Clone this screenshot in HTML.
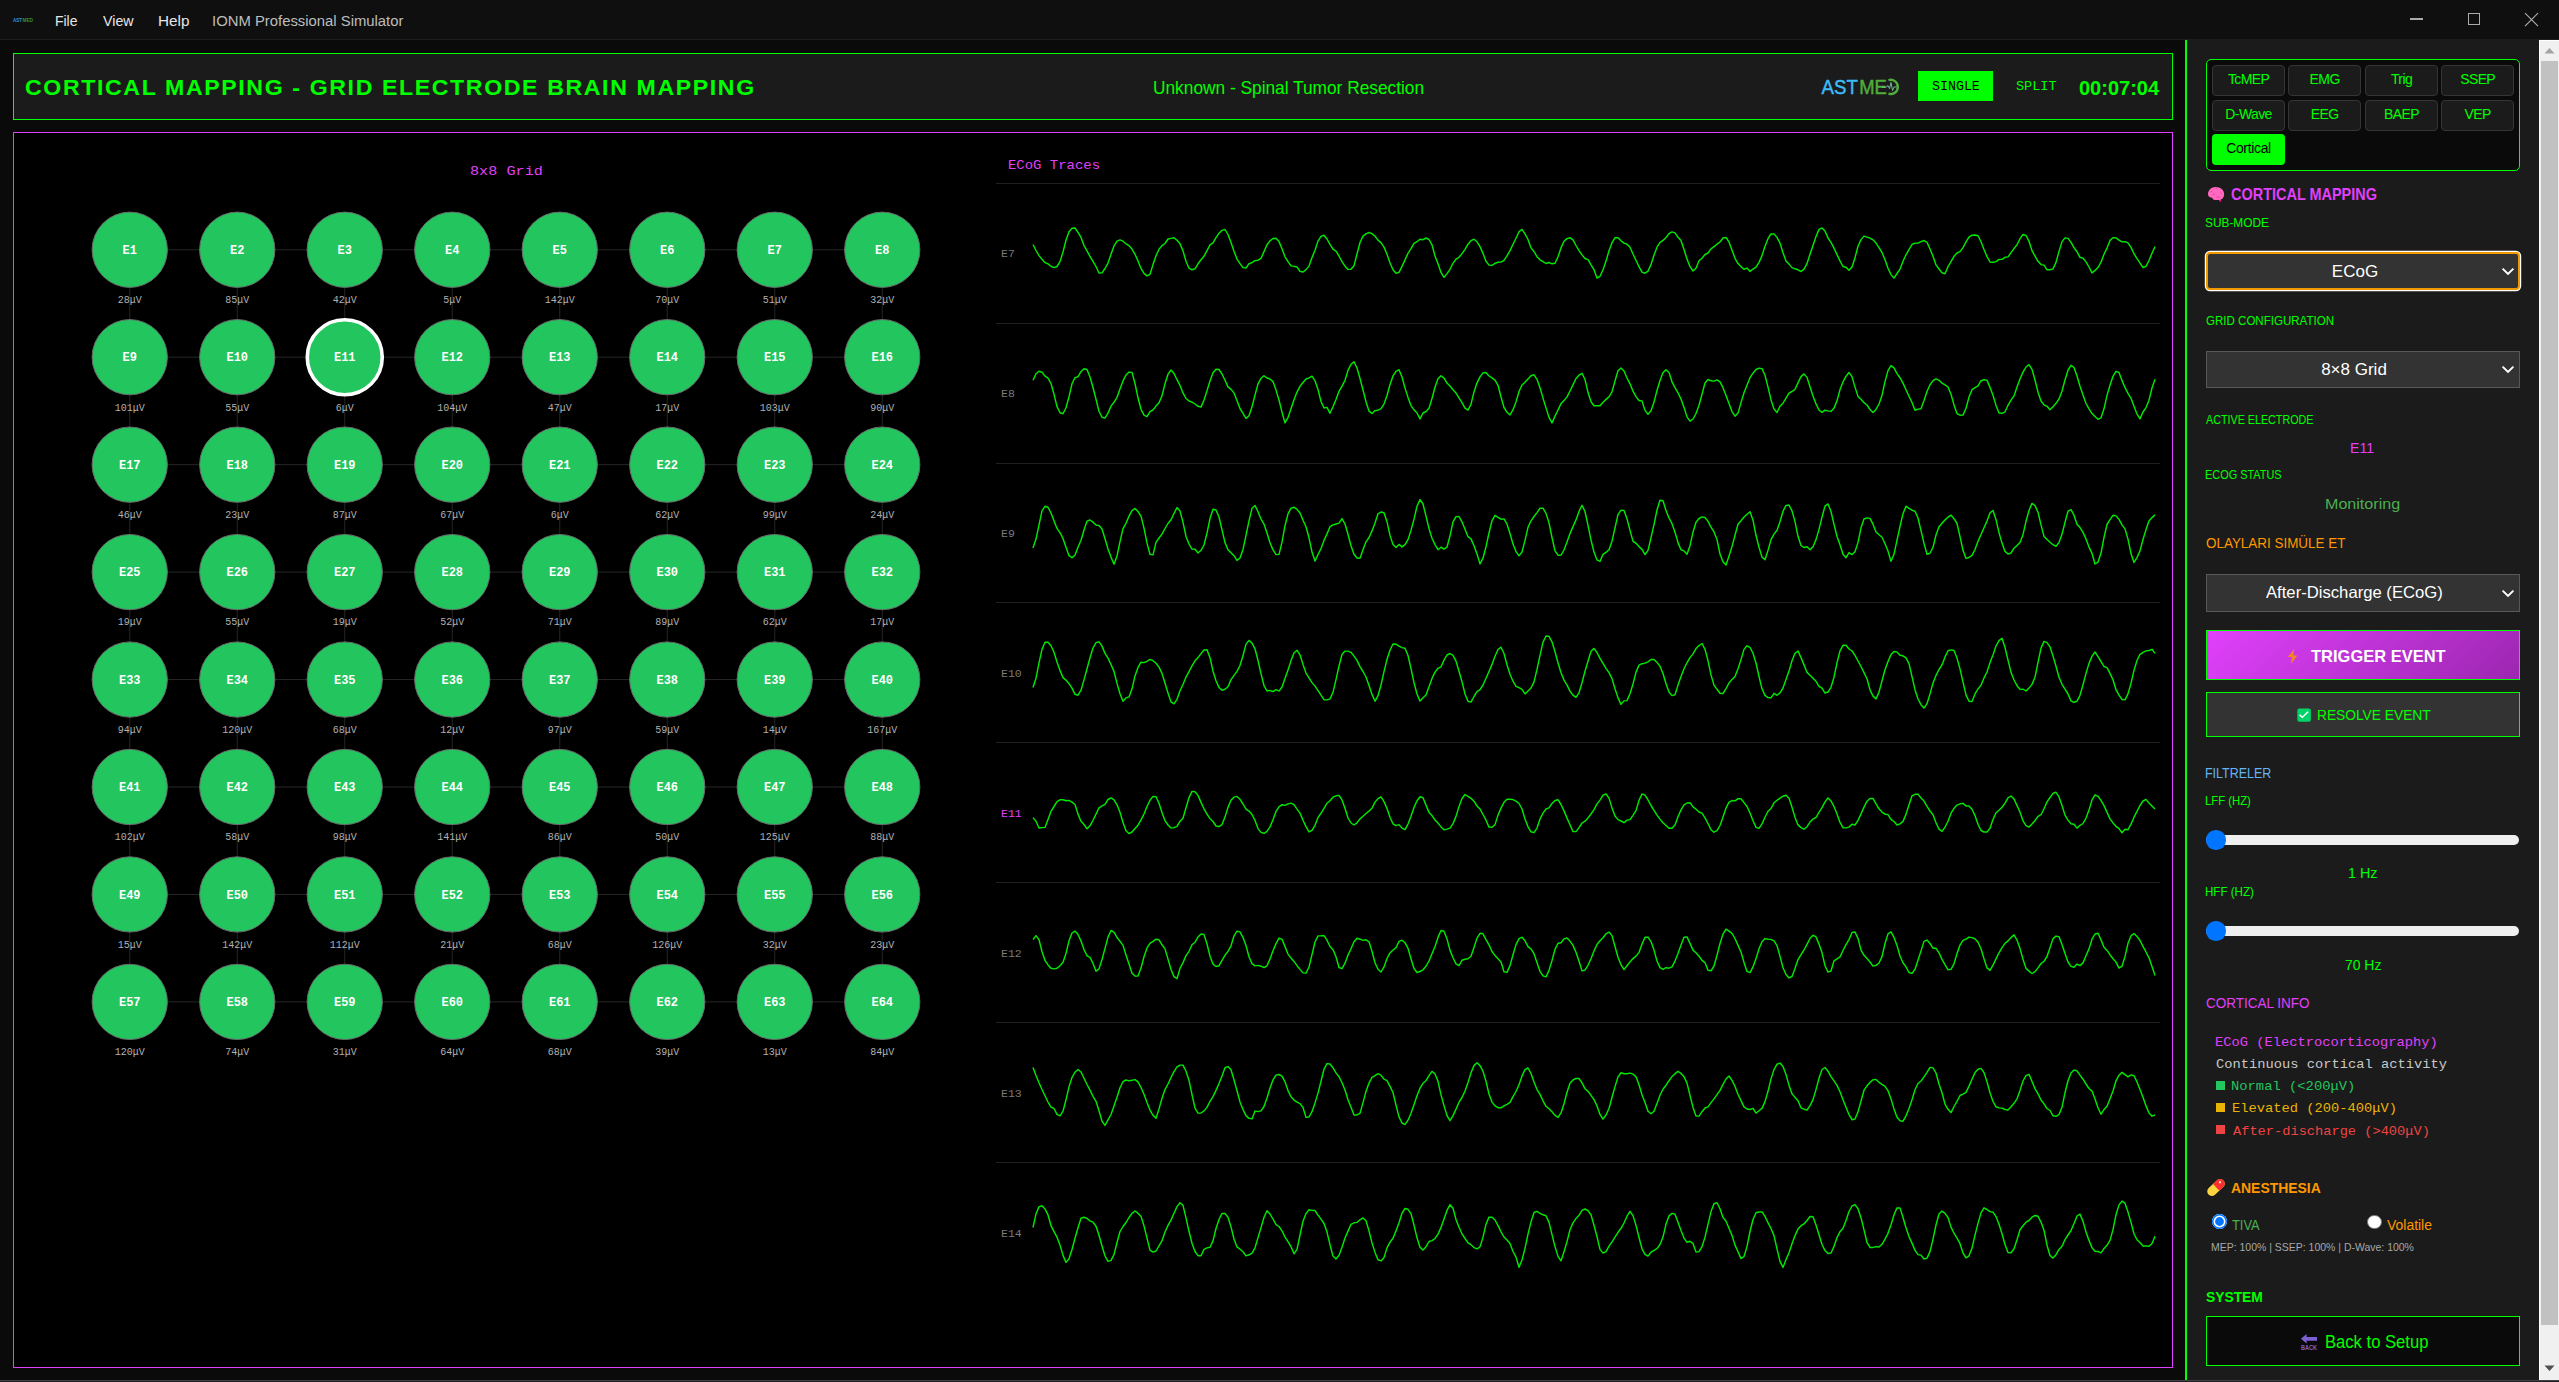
<!DOCTYPE html>
<html><head><meta charset="utf-8"><title>IONM Professional Simulator</title>
<style>
html,body{margin:0;padding:0;}
body{width:2559px;height:1382px;overflow:hidden;background:#0a0a0a;position:relative;font-family:'Liberation Sans', sans-serif;}
.t{position:absolute;line-height:1;white-space:nowrap;}
.r{position:absolute;box-sizing:border-box;}
svg{position:absolute;}
</style></head><body>

<div class="r" style="left:0px;top:0px;width:2559px;height:39px;background:#0f0f0f;"></div>
<div class="r" style="left:0px;top:39px;width:2559px;height:1px;background:#1f1f1f;"></div>
<svg style="left:12px;top:16px" width="24" height="8" viewBox="0 0 24 8"><text x="1" y="6.1" font-family="Liberation Sans" font-weight="700" font-size="6" fill="#3399dd" textLength="9" lengthAdjust="spacingAndGlyphs">AST</text><text x="10.5" y="6.1" font-family="Liberation Sans" font-weight="700" font-size="6" fill="#3f8a30" textLength="10.5" lengthAdjust="spacingAndGlyphs">MED</text></svg>
<div class="t" style="left:54.70px;top:12.58px;font-size:15.5px;color:#e6e6e6;font-weight:400;font-family:'Liberation Sans', sans-serif;transform:scaleX(0.9000);transform-origin:0 0;">File</div>
<div class="t" style="left:102.50px;top:12.58px;font-size:15.5px;color:#e6e6e6;font-weight:400;font-family:'Liberation Sans', sans-serif;transform:scaleX(0.9191);transform-origin:0 0;">View</div>
<div class="t" style="left:158.41px;top:12.58px;font-size:15.5px;color:#e6e6e6;font-weight:400;font-family:'Liberation Sans', sans-serif;transform:scaleX(0.9871);transform-origin:0 0;">Help</div>
<div class="t" style="left:212.14px;top:12.58px;font-size:15.5px;color:#bdbdbd;font-weight:400;font-family:'Liberation Sans', sans-serif;transform:scaleX(0.9580);transform-origin:0 0;">IONM Professional Simulator</div>
<div class="r" style="left:2410px;top:18.4px;width:13px;height:1.2px;background:#ababab;"></div>
<div class="r" style="left:2468px;top:13.2px;width:12px;height:12.3px;border:1.2px solid #ababab;"></div>
<svg style="left:2524px;top:12px" width="15" height="15" viewBox="0 0 15 15"><path d="M1 1.2L14 14.2M14 1.2L1 14.2" stroke="#ababab" stroke-width="1.2"/></svg>
<div class="r" style="left:13px;top:53px;width:2160px;height:67px;background:#1b1b1b;border:1px solid #00ff00;"></div>
<div class="t" style="left:25.28px;top:76.86px;font-size:22.6px;color:#00ff00;font-weight:700;font-family:'Liberation Sans', sans-serif;letter-spacing:1.6px;transform:scaleX(1.0221);transform-origin:0 0;">CORTICAL MAPPING - GRID ELECTRODE BRAIN MAPPING</div>
<div class="t" style="left:1152.82px;top:78.84px;font-size:18.5px;color:#00ff00;font-weight:400;font-family:'Liberation Sans', sans-serif;transform:scaleX(0.9349);transform-origin:0 0;">Unknown - Spinal Tumor Resection</div>
<svg style="left:1816px;top:72px" width="90" height="28" viewBox="0 0 90 28"><text x="5.6" y="22" font-family="Liberation Sans" font-size="20.3" fill="#3cbcf6" stroke="#3cbcf6" stroke-width="0.45" textLength="36.3" lengthAdjust="spacingAndGlyphs">AST</text><text x="43.2" y="22" font-family="Liberation Sans" font-size="20.3" fill="#4fae3a" stroke="#4fae3a" stroke-width="0.45" textLength="27.6" lengthAdjust="spacingAndGlyphs">ME</text><path d="M72.5 8.2 A7 7.1 0 1 1 72.5 21.6" fill="none" stroke="#4fae3a" stroke-width="2.4"/><path d="M66 15.2 L70 15.2 L72 13.6 L73.5 16.6 L75 10.5 L76.5 18.5 L78 15 L80.5 14.8" fill="none" stroke="#7fc9a8" stroke-width="0.9"/></svg>
<div class="r" style="left:1918px;top:71px;width:75px;height:30px;background:#00ff00;"></div>
<div class="t" style="left:1931.90px;top:81.11px;font-size:12px;color:#000;font-weight:400;font-family:'Liberation Mono', monospace;transform:scaleX(1.1070);transform-origin:0 0;">SINGLE</div>
<div class="t" style="left:2015.80px;top:81.11px;font-size:12px;color:#00ff00;font-weight:400;font-family:'Liberation Mono', monospace;transform:scaleX(1.1250);transform-origin:0 0;">SPLIT</div>
<div class="t" style="left:2079.00px;top:77.97px;font-size:20px;color:#00ff00;font-weight:700;font-family:'Liberation Sans', sans-serif;">00:07:04</div>
<div class="r" style="left:13px;top:132px;width:2160px;height:1236px;background:#000;border:1px solid #e040fb;"></div>
<div class="t" style="left:469.98px;top:164.56px;font-size:13.5px;color:#e040fb;font-weight:400;font-family:'Liberation Mono', monospace;transform:scaleX(1.1238);transform-origin:0 0;">8x8 Grid</div>
<svg style="left:0;top:0" width="1000" height="1100" viewBox="0 0 1000 1100"><line x1="129.75" y1="249.75" x2="882.25" y2="249.75" stroke="#262626" stroke-width="1"/><line x1="129.75" y1="357.20" x2="882.25" y2="357.20" stroke="#262626" stroke-width="1"/><line x1="129.75" y1="464.65" x2="882.25" y2="464.65" stroke="#262626" stroke-width="1"/><line x1="129.75" y1="572.10" x2="882.25" y2="572.10" stroke="#262626" stroke-width="1"/><line x1="129.75" y1="679.55" x2="882.25" y2="679.55" stroke="#262626" stroke-width="1"/><line x1="129.75" y1="787.00" x2="882.25" y2="787.00" stroke="#262626" stroke-width="1"/><line x1="129.75" y1="894.45" x2="882.25" y2="894.45" stroke="#262626" stroke-width="1"/><line x1="129.75" y1="1001.90" x2="882.25" y2="1001.90" stroke="#262626" stroke-width="1"/><line x1="129.75" y1="249.75" x2="129.75" y2="1001.9" stroke="#262626" stroke-width="1"/><line x1="237.25" y1="249.75" x2="237.25" y2="1001.9" stroke="#262626" stroke-width="1"/><line x1="344.75" y1="249.75" x2="344.75" y2="1001.9" stroke="#262626" stroke-width="1"/><line x1="452.25" y1="249.75" x2="452.25" y2="1001.9" stroke="#262626" stroke-width="1"/><line x1="559.75" y1="249.75" x2="559.75" y2="1001.9" stroke="#262626" stroke-width="1"/><line x1="667.25" y1="249.75" x2="667.25" y2="1001.9" stroke="#262626" stroke-width="1"/><line x1="774.75" y1="249.75" x2="774.75" y2="1001.9" stroke="#262626" stroke-width="1"/><line x1="882.25" y1="249.75" x2="882.25" y2="1001.9" stroke="#262626" stroke-width="1"/><circle cx="129.75" cy="249.75" r="37.65" fill="#22c55e" stroke="#6a6a6a" stroke-width="1"/><text x="129.75" y="253.95" font-family="Liberation Mono" font-weight="700" font-size="12" fill="#fff" text-anchor="middle">E1</text><text x="129.75" y="303.05" font-family="Liberation Mono" font-size="10" fill="#b0b0b0" text-anchor="middle">28&#956;V</text><circle cx="237.25" cy="249.75" r="37.65" fill="#22c55e" stroke="#6a6a6a" stroke-width="1"/><text x="237.25" y="253.95" font-family="Liberation Mono" font-weight="700" font-size="12" fill="#fff" text-anchor="middle">E2</text><text x="237.25" y="303.05" font-family="Liberation Mono" font-size="10" fill="#b0b0b0" text-anchor="middle">85&#956;V</text><circle cx="344.75" cy="249.75" r="37.65" fill="#22c55e" stroke="#6a6a6a" stroke-width="1"/><text x="344.75" y="253.95" font-family="Liberation Mono" font-weight="700" font-size="12" fill="#fff" text-anchor="middle">E3</text><text x="344.75" y="303.05" font-family="Liberation Mono" font-size="10" fill="#b0b0b0" text-anchor="middle">42&#956;V</text><circle cx="452.25" cy="249.75" r="37.65" fill="#22c55e" stroke="#6a6a6a" stroke-width="1"/><text x="452.25" y="253.95" font-family="Liberation Mono" font-weight="700" font-size="12" fill="#fff" text-anchor="middle">E4</text><text x="452.25" y="303.05" font-family="Liberation Mono" font-size="10" fill="#b0b0b0" text-anchor="middle">5&#956;V</text><circle cx="559.75" cy="249.75" r="37.65" fill="#22c55e" stroke="#6a6a6a" stroke-width="1"/><text x="559.75" y="253.95" font-family="Liberation Mono" font-weight="700" font-size="12" fill="#fff" text-anchor="middle">E5</text><text x="559.75" y="303.05" font-family="Liberation Mono" font-size="10" fill="#b0b0b0" text-anchor="middle">142&#956;V</text><circle cx="667.25" cy="249.75" r="37.65" fill="#22c55e" stroke="#6a6a6a" stroke-width="1"/><text x="667.25" y="253.95" font-family="Liberation Mono" font-weight="700" font-size="12" fill="#fff" text-anchor="middle">E6</text><text x="667.25" y="303.05" font-family="Liberation Mono" font-size="10" fill="#b0b0b0" text-anchor="middle">70&#956;V</text><circle cx="774.75" cy="249.75" r="37.65" fill="#22c55e" stroke="#6a6a6a" stroke-width="1"/><text x="774.75" y="253.95" font-family="Liberation Mono" font-weight="700" font-size="12" fill="#fff" text-anchor="middle">E7</text><text x="774.75" y="303.05" font-family="Liberation Mono" font-size="10" fill="#b0b0b0" text-anchor="middle">51&#956;V</text><circle cx="882.25" cy="249.75" r="37.65" fill="#22c55e" stroke="#6a6a6a" stroke-width="1"/><text x="882.25" y="253.95" font-family="Liberation Mono" font-weight="700" font-size="12" fill="#fff" text-anchor="middle">E8</text><text x="882.25" y="303.05" font-family="Liberation Mono" font-size="10" fill="#b0b0b0" text-anchor="middle">32&#956;V</text><circle cx="129.75" cy="357.20" r="37.65" fill="#22c55e" stroke="#6a6a6a" stroke-width="1"/><text x="129.75" y="361.40" font-family="Liberation Mono" font-weight="700" font-size="12" fill="#fff" text-anchor="middle">E9</text><text x="129.75" y="410.50" font-family="Liberation Mono" font-size="10" fill="#b0b0b0" text-anchor="middle">101&#956;V</text><circle cx="237.25" cy="357.20" r="37.65" fill="#22c55e" stroke="#6a6a6a" stroke-width="1"/><text x="237.25" y="361.40" font-family="Liberation Mono" font-weight="700" font-size="12" fill="#fff" text-anchor="middle">E10</text><text x="237.25" y="410.50" font-family="Liberation Mono" font-size="10" fill="#b0b0b0" text-anchor="middle">55&#956;V</text><circle cx="344.75" cy="357.20" r="37.80" fill="#22c55e"/><circle cx="344.75" cy="357.20" r="37.5" fill="none" stroke="#fff" stroke-width="3.6"/><text x="344.75" y="361.40" font-family="Liberation Mono" font-weight="700" font-size="12" fill="#fff" text-anchor="middle">E11</text><text x="344.75" y="410.50" font-family="Liberation Mono" font-size="10" fill="#b0b0b0" text-anchor="middle">6&#956;V</text><circle cx="452.25" cy="357.20" r="37.65" fill="#22c55e" stroke="#6a6a6a" stroke-width="1"/><text x="452.25" y="361.40" font-family="Liberation Mono" font-weight="700" font-size="12" fill="#fff" text-anchor="middle">E12</text><text x="452.25" y="410.50" font-family="Liberation Mono" font-size="10" fill="#b0b0b0" text-anchor="middle">104&#956;V</text><circle cx="559.75" cy="357.20" r="37.65" fill="#22c55e" stroke="#6a6a6a" stroke-width="1"/><text x="559.75" y="361.40" font-family="Liberation Mono" font-weight="700" font-size="12" fill="#fff" text-anchor="middle">E13</text><text x="559.75" y="410.50" font-family="Liberation Mono" font-size="10" fill="#b0b0b0" text-anchor="middle">47&#956;V</text><circle cx="667.25" cy="357.20" r="37.65" fill="#22c55e" stroke="#6a6a6a" stroke-width="1"/><text x="667.25" y="361.40" font-family="Liberation Mono" font-weight="700" font-size="12" fill="#fff" text-anchor="middle">E14</text><text x="667.25" y="410.50" font-family="Liberation Mono" font-size="10" fill="#b0b0b0" text-anchor="middle">17&#956;V</text><circle cx="774.75" cy="357.20" r="37.65" fill="#22c55e" stroke="#6a6a6a" stroke-width="1"/><text x="774.75" y="361.40" font-family="Liberation Mono" font-weight="700" font-size="12" fill="#fff" text-anchor="middle">E15</text><text x="774.75" y="410.50" font-family="Liberation Mono" font-size="10" fill="#b0b0b0" text-anchor="middle">103&#956;V</text><circle cx="882.25" cy="357.20" r="37.65" fill="#22c55e" stroke="#6a6a6a" stroke-width="1"/><text x="882.25" y="361.40" font-family="Liberation Mono" font-weight="700" font-size="12" fill="#fff" text-anchor="middle">E16</text><text x="882.25" y="410.50" font-family="Liberation Mono" font-size="10" fill="#b0b0b0" text-anchor="middle">90&#956;V</text><circle cx="129.75" cy="464.65" r="37.65" fill="#22c55e" stroke="#6a6a6a" stroke-width="1"/><text x="129.75" y="468.85" font-family="Liberation Mono" font-weight="700" font-size="12" fill="#fff" text-anchor="middle">E17</text><text x="129.75" y="517.95" font-family="Liberation Mono" font-size="10" fill="#b0b0b0" text-anchor="middle">46&#956;V</text><circle cx="237.25" cy="464.65" r="37.65" fill="#22c55e" stroke="#6a6a6a" stroke-width="1"/><text x="237.25" y="468.85" font-family="Liberation Mono" font-weight="700" font-size="12" fill="#fff" text-anchor="middle">E18</text><text x="237.25" y="517.95" font-family="Liberation Mono" font-size="10" fill="#b0b0b0" text-anchor="middle">23&#956;V</text><circle cx="344.75" cy="464.65" r="37.65" fill="#22c55e" stroke="#6a6a6a" stroke-width="1"/><text x="344.75" y="468.85" font-family="Liberation Mono" font-weight="700" font-size="12" fill="#fff" text-anchor="middle">E19</text><text x="344.75" y="517.95" font-family="Liberation Mono" font-size="10" fill="#b0b0b0" text-anchor="middle">87&#956;V</text><circle cx="452.25" cy="464.65" r="37.65" fill="#22c55e" stroke="#6a6a6a" stroke-width="1"/><text x="452.25" y="468.85" font-family="Liberation Mono" font-weight="700" font-size="12" fill="#fff" text-anchor="middle">E20</text><text x="452.25" y="517.95" font-family="Liberation Mono" font-size="10" fill="#b0b0b0" text-anchor="middle">67&#956;V</text><circle cx="559.75" cy="464.65" r="37.65" fill="#22c55e" stroke="#6a6a6a" stroke-width="1"/><text x="559.75" y="468.85" font-family="Liberation Mono" font-weight="700" font-size="12" fill="#fff" text-anchor="middle">E21</text><text x="559.75" y="517.95" font-family="Liberation Mono" font-size="10" fill="#b0b0b0" text-anchor="middle">6&#956;V</text><circle cx="667.25" cy="464.65" r="37.65" fill="#22c55e" stroke="#6a6a6a" stroke-width="1"/><text x="667.25" y="468.85" font-family="Liberation Mono" font-weight="700" font-size="12" fill="#fff" text-anchor="middle">E22</text><text x="667.25" y="517.95" font-family="Liberation Mono" font-size="10" fill="#b0b0b0" text-anchor="middle">62&#956;V</text><circle cx="774.75" cy="464.65" r="37.65" fill="#22c55e" stroke="#6a6a6a" stroke-width="1"/><text x="774.75" y="468.85" font-family="Liberation Mono" font-weight="700" font-size="12" fill="#fff" text-anchor="middle">E23</text><text x="774.75" y="517.95" font-family="Liberation Mono" font-size="10" fill="#b0b0b0" text-anchor="middle">99&#956;V</text><circle cx="882.25" cy="464.65" r="37.65" fill="#22c55e" stroke="#6a6a6a" stroke-width="1"/><text x="882.25" y="468.85" font-family="Liberation Mono" font-weight="700" font-size="12" fill="#fff" text-anchor="middle">E24</text><text x="882.25" y="517.95" font-family="Liberation Mono" font-size="10" fill="#b0b0b0" text-anchor="middle">24&#956;V</text><circle cx="129.75" cy="572.10" r="37.65" fill="#22c55e" stroke="#6a6a6a" stroke-width="1"/><text x="129.75" y="576.30" font-family="Liberation Mono" font-weight="700" font-size="12" fill="#fff" text-anchor="middle">E25</text><text x="129.75" y="625.40" font-family="Liberation Mono" font-size="10" fill="#b0b0b0" text-anchor="middle">19&#956;V</text><circle cx="237.25" cy="572.10" r="37.65" fill="#22c55e" stroke="#6a6a6a" stroke-width="1"/><text x="237.25" y="576.30" font-family="Liberation Mono" font-weight="700" font-size="12" fill="#fff" text-anchor="middle">E26</text><text x="237.25" y="625.40" font-family="Liberation Mono" font-size="10" fill="#b0b0b0" text-anchor="middle">55&#956;V</text><circle cx="344.75" cy="572.10" r="37.65" fill="#22c55e" stroke="#6a6a6a" stroke-width="1"/><text x="344.75" y="576.30" font-family="Liberation Mono" font-weight="700" font-size="12" fill="#fff" text-anchor="middle">E27</text><text x="344.75" y="625.40" font-family="Liberation Mono" font-size="10" fill="#b0b0b0" text-anchor="middle">19&#956;V</text><circle cx="452.25" cy="572.10" r="37.65" fill="#22c55e" stroke="#6a6a6a" stroke-width="1"/><text x="452.25" y="576.30" font-family="Liberation Mono" font-weight="700" font-size="12" fill="#fff" text-anchor="middle">E28</text><text x="452.25" y="625.40" font-family="Liberation Mono" font-size="10" fill="#b0b0b0" text-anchor="middle">52&#956;V</text><circle cx="559.75" cy="572.10" r="37.65" fill="#22c55e" stroke="#6a6a6a" stroke-width="1"/><text x="559.75" y="576.30" font-family="Liberation Mono" font-weight="700" font-size="12" fill="#fff" text-anchor="middle">E29</text><text x="559.75" y="625.40" font-family="Liberation Mono" font-size="10" fill="#b0b0b0" text-anchor="middle">71&#956;V</text><circle cx="667.25" cy="572.10" r="37.65" fill="#22c55e" stroke="#6a6a6a" stroke-width="1"/><text x="667.25" y="576.30" font-family="Liberation Mono" font-weight="700" font-size="12" fill="#fff" text-anchor="middle">E30</text><text x="667.25" y="625.40" font-family="Liberation Mono" font-size="10" fill="#b0b0b0" text-anchor="middle">89&#956;V</text><circle cx="774.75" cy="572.10" r="37.65" fill="#22c55e" stroke="#6a6a6a" stroke-width="1"/><text x="774.75" y="576.30" font-family="Liberation Mono" font-weight="700" font-size="12" fill="#fff" text-anchor="middle">E31</text><text x="774.75" y="625.40" font-family="Liberation Mono" font-size="10" fill="#b0b0b0" text-anchor="middle">62&#956;V</text><circle cx="882.25" cy="572.10" r="37.65" fill="#22c55e" stroke="#6a6a6a" stroke-width="1"/><text x="882.25" y="576.30" font-family="Liberation Mono" font-weight="700" font-size="12" fill="#fff" text-anchor="middle">E32</text><text x="882.25" y="625.40" font-family="Liberation Mono" font-size="10" fill="#b0b0b0" text-anchor="middle">17&#956;V</text><circle cx="129.75" cy="679.55" r="37.65" fill="#22c55e" stroke="#6a6a6a" stroke-width="1"/><text x="129.75" y="683.75" font-family="Liberation Mono" font-weight="700" font-size="12" fill="#fff" text-anchor="middle">E33</text><text x="129.75" y="732.85" font-family="Liberation Mono" font-size="10" fill="#b0b0b0" text-anchor="middle">94&#956;V</text><circle cx="237.25" cy="679.55" r="37.65" fill="#22c55e" stroke="#6a6a6a" stroke-width="1"/><text x="237.25" y="683.75" font-family="Liberation Mono" font-weight="700" font-size="12" fill="#fff" text-anchor="middle">E34</text><text x="237.25" y="732.85" font-family="Liberation Mono" font-size="10" fill="#b0b0b0" text-anchor="middle">120&#956;V</text><circle cx="344.75" cy="679.55" r="37.65" fill="#22c55e" stroke="#6a6a6a" stroke-width="1"/><text x="344.75" y="683.75" font-family="Liberation Mono" font-weight="700" font-size="12" fill="#fff" text-anchor="middle">E35</text><text x="344.75" y="732.85" font-family="Liberation Mono" font-size="10" fill="#b0b0b0" text-anchor="middle">68&#956;V</text><circle cx="452.25" cy="679.55" r="37.65" fill="#22c55e" stroke="#6a6a6a" stroke-width="1"/><text x="452.25" y="683.75" font-family="Liberation Mono" font-weight="700" font-size="12" fill="#fff" text-anchor="middle">E36</text><text x="452.25" y="732.85" font-family="Liberation Mono" font-size="10" fill="#b0b0b0" text-anchor="middle">12&#956;V</text><circle cx="559.75" cy="679.55" r="37.65" fill="#22c55e" stroke="#6a6a6a" stroke-width="1"/><text x="559.75" y="683.75" font-family="Liberation Mono" font-weight="700" font-size="12" fill="#fff" text-anchor="middle">E37</text><text x="559.75" y="732.85" font-family="Liberation Mono" font-size="10" fill="#b0b0b0" text-anchor="middle">97&#956;V</text><circle cx="667.25" cy="679.55" r="37.65" fill="#22c55e" stroke="#6a6a6a" stroke-width="1"/><text x="667.25" y="683.75" font-family="Liberation Mono" font-weight="700" font-size="12" fill="#fff" text-anchor="middle">E38</text><text x="667.25" y="732.85" font-family="Liberation Mono" font-size="10" fill="#b0b0b0" text-anchor="middle">59&#956;V</text><circle cx="774.75" cy="679.55" r="37.65" fill="#22c55e" stroke="#6a6a6a" stroke-width="1"/><text x="774.75" y="683.75" font-family="Liberation Mono" font-weight="700" font-size="12" fill="#fff" text-anchor="middle">E39</text><text x="774.75" y="732.85" font-family="Liberation Mono" font-size="10" fill="#b0b0b0" text-anchor="middle">14&#956;V</text><circle cx="882.25" cy="679.55" r="37.65" fill="#22c55e" stroke="#6a6a6a" stroke-width="1"/><text x="882.25" y="683.75" font-family="Liberation Mono" font-weight="700" font-size="12" fill="#fff" text-anchor="middle">E40</text><text x="882.25" y="732.85" font-family="Liberation Mono" font-size="10" fill="#b0b0b0" text-anchor="middle">167&#956;V</text><circle cx="129.75" cy="787.00" r="37.65" fill="#22c55e" stroke="#6a6a6a" stroke-width="1"/><text x="129.75" y="791.20" font-family="Liberation Mono" font-weight="700" font-size="12" fill="#fff" text-anchor="middle">E41</text><text x="129.75" y="840.30" font-family="Liberation Mono" font-size="10" fill="#b0b0b0" text-anchor="middle">102&#956;V</text><circle cx="237.25" cy="787.00" r="37.65" fill="#22c55e" stroke="#6a6a6a" stroke-width="1"/><text x="237.25" y="791.20" font-family="Liberation Mono" font-weight="700" font-size="12" fill="#fff" text-anchor="middle">E42</text><text x="237.25" y="840.30" font-family="Liberation Mono" font-size="10" fill="#b0b0b0" text-anchor="middle">58&#956;V</text><circle cx="344.75" cy="787.00" r="37.65" fill="#22c55e" stroke="#6a6a6a" stroke-width="1"/><text x="344.75" y="791.20" font-family="Liberation Mono" font-weight="700" font-size="12" fill="#fff" text-anchor="middle">E43</text><text x="344.75" y="840.30" font-family="Liberation Mono" font-size="10" fill="#b0b0b0" text-anchor="middle">98&#956;V</text><circle cx="452.25" cy="787.00" r="37.65" fill="#22c55e" stroke="#6a6a6a" stroke-width="1"/><text x="452.25" y="791.20" font-family="Liberation Mono" font-weight="700" font-size="12" fill="#fff" text-anchor="middle">E44</text><text x="452.25" y="840.30" font-family="Liberation Mono" font-size="10" fill="#b0b0b0" text-anchor="middle">141&#956;V</text><circle cx="559.75" cy="787.00" r="37.65" fill="#22c55e" stroke="#6a6a6a" stroke-width="1"/><text x="559.75" y="791.20" font-family="Liberation Mono" font-weight="700" font-size="12" fill="#fff" text-anchor="middle">E45</text><text x="559.75" y="840.30" font-family="Liberation Mono" font-size="10" fill="#b0b0b0" text-anchor="middle">86&#956;V</text><circle cx="667.25" cy="787.00" r="37.65" fill="#22c55e" stroke="#6a6a6a" stroke-width="1"/><text x="667.25" y="791.20" font-family="Liberation Mono" font-weight="700" font-size="12" fill="#fff" text-anchor="middle">E46</text><text x="667.25" y="840.30" font-family="Liberation Mono" font-size="10" fill="#b0b0b0" text-anchor="middle">50&#956;V</text><circle cx="774.75" cy="787.00" r="37.65" fill="#22c55e" stroke="#6a6a6a" stroke-width="1"/><text x="774.75" y="791.20" font-family="Liberation Mono" font-weight="700" font-size="12" fill="#fff" text-anchor="middle">E47</text><text x="774.75" y="840.30" font-family="Liberation Mono" font-size="10" fill="#b0b0b0" text-anchor="middle">125&#956;V</text><circle cx="882.25" cy="787.00" r="37.65" fill="#22c55e" stroke="#6a6a6a" stroke-width="1"/><text x="882.25" y="791.20" font-family="Liberation Mono" font-weight="700" font-size="12" fill="#fff" text-anchor="middle">E48</text><text x="882.25" y="840.30" font-family="Liberation Mono" font-size="10" fill="#b0b0b0" text-anchor="middle">88&#956;V</text><circle cx="129.75" cy="894.45" r="37.65" fill="#22c55e" stroke="#6a6a6a" stroke-width="1"/><text x="129.75" y="898.65" font-family="Liberation Mono" font-weight="700" font-size="12" fill="#fff" text-anchor="middle">E49</text><text x="129.75" y="947.75" font-family="Liberation Mono" font-size="10" fill="#b0b0b0" text-anchor="middle">15&#956;V</text><circle cx="237.25" cy="894.45" r="37.65" fill="#22c55e" stroke="#6a6a6a" stroke-width="1"/><text x="237.25" y="898.65" font-family="Liberation Mono" font-weight="700" font-size="12" fill="#fff" text-anchor="middle">E50</text><text x="237.25" y="947.75" font-family="Liberation Mono" font-size="10" fill="#b0b0b0" text-anchor="middle">142&#956;V</text><circle cx="344.75" cy="894.45" r="37.65" fill="#22c55e" stroke="#6a6a6a" stroke-width="1"/><text x="344.75" y="898.65" font-family="Liberation Mono" font-weight="700" font-size="12" fill="#fff" text-anchor="middle">E51</text><text x="344.75" y="947.75" font-family="Liberation Mono" font-size="10" fill="#b0b0b0" text-anchor="middle">112&#956;V</text><circle cx="452.25" cy="894.45" r="37.65" fill="#22c55e" stroke="#6a6a6a" stroke-width="1"/><text x="452.25" y="898.65" font-family="Liberation Mono" font-weight="700" font-size="12" fill="#fff" text-anchor="middle">E52</text><text x="452.25" y="947.75" font-family="Liberation Mono" font-size="10" fill="#b0b0b0" text-anchor="middle">21&#956;V</text><circle cx="559.75" cy="894.45" r="37.65" fill="#22c55e" stroke="#6a6a6a" stroke-width="1"/><text x="559.75" y="898.65" font-family="Liberation Mono" font-weight="700" font-size="12" fill="#fff" text-anchor="middle">E53</text><text x="559.75" y="947.75" font-family="Liberation Mono" font-size="10" fill="#b0b0b0" text-anchor="middle">68&#956;V</text><circle cx="667.25" cy="894.45" r="37.65" fill="#22c55e" stroke="#6a6a6a" stroke-width="1"/><text x="667.25" y="898.65" font-family="Liberation Mono" font-weight="700" font-size="12" fill="#fff" text-anchor="middle">E54</text><text x="667.25" y="947.75" font-family="Liberation Mono" font-size="10" fill="#b0b0b0" text-anchor="middle">126&#956;V</text><circle cx="774.75" cy="894.45" r="37.65" fill="#22c55e" stroke="#6a6a6a" stroke-width="1"/><text x="774.75" y="898.65" font-family="Liberation Mono" font-weight="700" font-size="12" fill="#fff" text-anchor="middle">E55</text><text x="774.75" y="947.75" font-family="Liberation Mono" font-size="10" fill="#b0b0b0" text-anchor="middle">32&#956;V</text><circle cx="882.25" cy="894.45" r="37.65" fill="#22c55e" stroke="#6a6a6a" stroke-width="1"/><text x="882.25" y="898.65" font-family="Liberation Mono" font-weight="700" font-size="12" fill="#fff" text-anchor="middle">E56</text><text x="882.25" y="947.75" font-family="Liberation Mono" font-size="10" fill="#b0b0b0" text-anchor="middle">23&#956;V</text><circle cx="129.75" cy="1001.90" r="37.65" fill="#22c55e" stroke="#6a6a6a" stroke-width="1"/><text x="129.75" y="1006.10" font-family="Liberation Mono" font-weight="700" font-size="12" fill="#fff" text-anchor="middle">E57</text><text x="129.75" y="1055.20" font-family="Liberation Mono" font-size="10" fill="#b0b0b0" text-anchor="middle">120&#956;V</text><circle cx="237.25" cy="1001.90" r="37.65" fill="#22c55e" stroke="#6a6a6a" stroke-width="1"/><text x="237.25" y="1006.10" font-family="Liberation Mono" font-weight="700" font-size="12" fill="#fff" text-anchor="middle">E58</text><text x="237.25" y="1055.20" font-family="Liberation Mono" font-size="10" fill="#b0b0b0" text-anchor="middle">74&#956;V</text><circle cx="344.75" cy="1001.90" r="37.65" fill="#22c55e" stroke="#6a6a6a" stroke-width="1"/><text x="344.75" y="1006.10" font-family="Liberation Mono" font-weight="700" font-size="12" fill="#fff" text-anchor="middle">E59</text><text x="344.75" y="1055.20" font-family="Liberation Mono" font-size="10" fill="#b0b0b0" text-anchor="middle">31&#956;V</text><circle cx="452.25" cy="1001.90" r="37.65" fill="#22c55e" stroke="#6a6a6a" stroke-width="1"/><text x="452.25" y="1006.10" font-family="Liberation Mono" font-weight="700" font-size="12" fill="#fff" text-anchor="middle">E60</text><text x="452.25" y="1055.20" font-family="Liberation Mono" font-size="10" fill="#b0b0b0" text-anchor="middle">64&#956;V</text><circle cx="559.75" cy="1001.90" r="37.65" fill="#22c55e" stroke="#6a6a6a" stroke-width="1"/><text x="559.75" y="1006.10" font-family="Liberation Mono" font-weight="700" font-size="12" fill="#fff" text-anchor="middle">E61</text><text x="559.75" y="1055.20" font-family="Liberation Mono" font-size="10" fill="#b0b0b0" text-anchor="middle">68&#956;V</text><circle cx="667.25" cy="1001.90" r="37.65" fill="#22c55e" stroke="#6a6a6a" stroke-width="1"/><text x="667.25" y="1006.10" font-family="Liberation Mono" font-weight="700" font-size="12" fill="#fff" text-anchor="middle">E62</text><text x="667.25" y="1055.20" font-family="Liberation Mono" font-size="10" fill="#b0b0b0" text-anchor="middle">39&#956;V</text><circle cx="774.75" cy="1001.90" r="37.65" fill="#22c55e" stroke="#6a6a6a" stroke-width="1"/><text x="774.75" y="1006.10" font-family="Liberation Mono" font-weight="700" font-size="12" fill="#fff" text-anchor="middle">E63</text><text x="774.75" y="1055.20" font-family="Liberation Mono" font-size="10" fill="#b0b0b0" text-anchor="middle">13&#956;V</text><circle cx="882.25" cy="1001.90" r="37.65" fill="#22c55e" stroke="#6a6a6a" stroke-width="1"/><text x="882.25" y="1006.10" font-family="Liberation Mono" font-weight="700" font-size="12" fill="#fff" text-anchor="middle">E64</text><text x="882.25" y="1055.20" font-family="Liberation Mono" font-size="10" fill="#b0b0b0" text-anchor="middle">84&#956;V</text></svg>
<div class="t" style="left:1007.73px;top:158.94px;font-size:13px;color:#e040fb;font-weight:400;font-family:'Liberation Mono', monospace;transform:scaleX(1.0726);transform-origin:0 0;">ECoG Traces</div>
<svg style="left:990px;top:170px" width="1180" height="1140" viewBox="990 170 1180 1140"><line x1="996" y1="183.5" x2="2160" y2="183.5" stroke="#212121" stroke-width="1"/><text x="1001" y="257" font-family="Liberation Mono" font-size="11.5" fill="#7a7a7a">E7</text><polyline points="1033,244.5 1036,250.5 1039,255.6 1042,259.3 1045,262.7 1048,263.9 1051,266.3 1054,267.6 1057,266.5 1060,261.6 1063,252.0 1066,240.3 1069,231.8 1072,228.3 1075,228.0 1078,232.4 1081,237.4 1084,245.6 1087,250.9 1090,256.5 1093,261.3 1096,266.5 1099,273.0 1102,272.9 1105,268.5 1108,263.1 1111,254.3 1114,245.9 1117,241.1 1120,239.9 1123,241.2 1126,243.8 1129,245.7 1132,249.1 1135,254.3 1138,260.9 1141,268.4 1144,273.4 1147,275.9 1150,274.3 1153,264.6 1156,255.8 1159,249.3 1162,245.6 1165,243.5 1168,239.0 1171,238.4 1174,237.8 1177,240.3 1180,243.8 1183,250.9 1186,261.2 1189,268.2 1192,269.8 1195,268.8 1198,263.8 1201,259.8 1204,256.2 1207,250.7 1210,244.9 1213,242.9 1216,237.6 1219,233.2 1222,230.4 1225,229.5 1228,234.5 1231,242.5 1234,251.2 1237,259.1 1240,263.6 1243,267.6 1246,268.0 1249,263.7 1252,262.6 1255,260.6 1258,260.2 1261,258.4 1264,251.6 1267,244.7 1270,240.9 1273,238.5 1276,238.2 1279,241.6 1282,248.8 1285,256.8 1288,261.6 1291,265.9 1294,266.4 1297,267.0 1300,271.3 1303,272.0 1306,269.6 1309,266.1 1312,257.6 1315,250.3 1318,241.1 1321,236.4 1324,235.2 1327,239.0 1330,244.4 1333,249.2 1336,251.1 1339,256.0 1342,261.7 1345,266.2 1348,269.4 1351,269.2 1354,265.7 1357,254.0 1360,242.5 1363,236.1 1366,233.8 1369,232.5 1372,233.6 1375,236.3 1378,240.1 1381,242.6 1384,247.1 1387,254.3 1390,262.8 1393,269.7 1396,273.2 1399,272.3 1402,266.4 1405,259.9 1408,253.3 1411,248.7 1414,243.4 1417,241.7 1420,239.3 1423,239.7 1426,238.0 1429,239.5 1432,244.8 1435,256.0 1438,263.8 1441,272.4 1444,277.4 1447,273.6 1450,269.3 1453,263.3 1456,259.1 1459,257.3 1462,253.6 1465,249.4 1468,244.2 1471,240.7 1474,239.2 1477,241.8 1480,246.6 1483,253.4 1486,261.3 1489,265.1 1492,265.4 1495,263.3 1498,262.2 1501,262.1 1504,260.3 1507,255.9 1510,250.6 1513,244.2 1516,238.2 1519,231.8 1522,229.4 1525,233.8 1528,239.5 1531,247.9 1534,251.5 1537,256.7 1540,259.8 1543,261.6 1546,263.5 1549,262.5 1552,263.8 1555,263.3 1558,256.7 1561,247.9 1564,241.3 1567,238.6 1570,237.7 1573,239.9 1576,245.5 1579,250.6 1582,254.9 1585,258.5 1588,259.7 1591,264.9 1594,269.7 1597,278.1 1600,276.3 1603,269.8 1606,261.1 1609,250.8 1612,242.8 1615,237.7 1618,237.7 1621,240.8 1624,243.1 1627,244.2 1630,247.2 1633,254.0 1636,260.2 1639,266.7 1642,272.1 1645,273.2 1648,271.1 1651,264.4 1654,255.3 1657,247.2 1660,242.3 1663,240.4 1666,237.5 1669,233.6 1672,231.9 1675,232.9 1678,237.3 1681,240.5 1684,249.6 1687,259.1 1690,266.7 1693,271.0 1696,268.2 1699,260.7 1702,258.2 1705,254.5 1708,253.0 1711,248.9 1714,246.6 1717,244.2 1720,242.0 1723,238.0 1726,237.5 1729,241.9 1732,250.1 1735,258.3 1738,263.6 1741,266.6 1744,269.2 1747,268.1 1750,271.4 1753,269.2 1756,267.1 1759,262.4 1762,255.6 1765,246.3 1768,238.7 1771,233.9 1774,233.9 1777,237.4 1780,243.1 1783,252.7 1786,261.1 1789,264.1 1792,267.6 1795,268.8 1798,269.8 1801,271.5 1804,269.2 1807,263.6 1810,254.3 1813,245.4 1816,236.6 1819,229.4 1822,227.9 1825,231.1 1828,238.0 1831,242.4 1834,248.2 1837,254.6 1840,260.9 1843,266.5 1846,267.2 1849,270.2 1852,267.0 1855,257.8 1858,246.2 1861,239.6 1864,236.1 1867,237.1 1870,238.1 1873,239.8 1876,243.1 1879,247.7 1882,252.5 1885,259.8 1888,268.2 1891,274.6 1894,278.1 1897,273.5 1900,269.2 1903,261.3 1906,254.8 1909,249.6 1912,244.5 1915,243.2 1918,243.1 1921,241.6 1924,240.5 1927,242.3 1930,249.0 1933,256.3 1936,264.9 1939,269.0 1942,272.8 1945,273.7 1948,266.7 1951,261.7 1954,256.3 1957,253.0 1960,251.6 1963,247.6 1966,241.9 1969,237.1 1972,235.2 1975,235.0 1978,235.7 1981,241.8 1984,249.5 1987,256.6 1990,262.0 1993,262.3 1996,261.6 1999,259.4 2002,259.3 2005,257.3 2008,256.9 2011,252.7 2014,248.6 2017,244.7 2020,238.7 2023,234.5 2026,235.5 2029,241.3 2032,250.6 2035,256.2 2038,261.3 2041,264.6 2044,265.1 2047,269.8 2050,269.8 2053,268.9 2056,262.4 2059,251.4 2062,241.6 2065,237.9 2068,238.4 2071,242.2 2074,247.8 2077,251.8 2080,257.3 2083,258.3 2086,261.9 2089,267.0 2092,272.9 2095,270.4 2098,267.5 2101,262.2 2104,254.2 2107,248.1 2110,240.4 2113,237.8 2116,237.9 2119,240.1 2122,241.9 2125,241.7 2128,242.9 2131,247.4 2134,253.7 2137,258.6 2140,263.1 2143,267.5 2146,266.4 2149,260.5 2152,253.2 2155,246.6" fill="none" stroke="#00e800" stroke-width="1.45" stroke-linejoin="round"/><line x1="996" y1="323.5" x2="2160" y2="323.5" stroke="#212121" stroke-width="1"/><text x="1001" y="397" font-family="Liberation Mono" font-size="11.5" fill="#7a7a7a">E8</text><polyline points="1033,380.3 1036,373.8 1039,371.2 1042,372.3 1045,376.1 1048,378.1 1051,383.5 1054,394.3 1057,406.6 1060,412.7 1063,413.7 1066,407.7 1069,396.7 1072,383.8 1075,377.6 1078,376.7 1081,371.6 1084,368.7 1087,369.5 1090,377.0 1093,387.5 1096,399.3 1099,411.2 1102,417.2 1105,418.1 1108,413.2 1111,406.1 1114,402.3 1117,397.3 1120,388.9 1123,380.9 1126,375.0 1129,372.1 1132,372.4 1135,383.5 1138,397.8 1141,409.3 1144,415.1 1147,416.6 1150,411.6 1153,410.0 1156,406.1 1159,402.8 1162,395.8 1165,383.7 1168,374.2 1171,370.0 1174,373.5 1177,379.7 1180,385.4 1183,392.9 1186,398.5 1189,401.0 1192,402.2 1195,404.0 1198,406.3 1201,407.1 1204,400.0 1207,390.6 1210,381.0 1213,372.8 1216,369.2 1219,369.5 1222,374.0 1225,380.2 1228,386.9 1231,389.4 1234,392.9 1237,400.8 1240,408.5 1243,413.3 1246,418.4 1249,415.8 1252,406.8 1255,395.1 1258,383.9 1261,378.3 1264,375.8 1267,378.0 1270,379.0 1273,381.6 1276,390.1 1279,400.0 1282,412.2 1285,422.9 1288,417.6 1291,408.8 1294,399.7 1297,392.1 1300,386.3 1303,382.5 1306,379.0 1309,377.8 1312,376.2 1315,380.8 1318,389.4 1321,401.5 1324,408.0 1327,407.4 1330,413.3 1333,406.7 1336,399.5 1339,391.3 1342,386.2 1345,380.3 1348,370.4 1351,364.3 1354,361.8 1357,368.0 1360,378.5 1363,390.0 1366,401.7 1369,411.1 1372,413.5 1375,410.6 1378,410.2 1381,408.7 1384,404.1 1387,395.5 1390,384.5 1393,375.9 1396,371.3 1399,369.7 1402,377.0 1405,388.1 1408,397.4 1411,405.6 1414,409.8 1417,413.0 1420,418.9 1423,413.0 1426,411.5 1429,408.3 1432,398.5 1435,387.3 1438,378.7 1441,375.7 1444,378.1 1447,383.0 1450,386.0 1453,389.7 1456,393.1 1459,397.9 1462,402.7 1465,408.2 1468,410.2 1471,404.1 1474,391.9 1477,382.8 1480,376.9 1483,372.9 1486,372.5 1489,376.0 1492,377.9 1495,380.2 1498,385.3 1501,397.0 1504,407.5 1507,412.3 1510,415.0 1513,409.7 1516,401.9 1519,391.5 1522,385.0 1525,382.2 1528,379.0 1531,375.8 1534,374.8 1537,379.3 1540,387.7 1543,398.1 1546,407.9 1549,417.4 1552,422.9 1555,416.1 1558,410.0 1561,403.6 1564,400.6 1567,396.9 1570,391.0 1573,384.9 1576,378.5 1579,375.2 1582,373.3 1585,379.5 1588,392.3 1591,401.8 1594,405.8 1597,405.8 1600,405.8 1603,402.2 1606,399.4 1609,396.9 1612,391.9 1615,381.0 1618,370.8 1621,368.0 1624,371.0 1627,378.0 1630,383.8 1633,391.2 1636,396.6 1639,400.5 1642,401.0 1645,410.4 1648,414.2 1651,410.7 1654,402.1 1657,390.5 1660,380.5 1663,372.6 1666,369.8 1669,372.5 1672,381.8 1675,387.7 1678,392.8 1681,399.1 1684,407.4 1687,416.9 1690,421.2 1693,419.0 1696,413.5 1699,405.2 1702,394.2 1705,383.0 1708,379.5 1711,380.8 1714,381.1 1717,379.9 1720,381.8 1723,387.7 1726,395.6 1729,403.4 1732,411.6 1735,416.2 1738,413.1 1741,402.6 1744,392.7 1747,385.3 1750,377.7 1753,373.2 1756,369.5 1759,368.2 1762,368.6 1765,375.2 1768,387.1 1771,399.7 1774,409.1 1777,412.4 1780,406.3 1783,403.2 1786,398.1 1789,393.2 1792,391.5 1795,389.3 1798,382.9 1801,376.6 1804,373.9 1807,377.4 1810,386.7 1813,396.0 1816,403.9 1819,410.0 1822,412.4 1825,410.2 1828,410.9 1831,411.4 1834,408.1 1837,400.9 1840,389.6 1843,381.9 1846,376.2 1849,372.5 1852,376.6 1855,387.1 1858,396.4 1861,399.3 1864,402.7 1867,405.0 1870,409.6 1873,412.6 1876,409.4 1879,404.0 1882,395.4 1885,381.6 1888,370.6 1891,365.5 1894,367.8 1897,373.6 1900,377.7 1903,383.1 1906,389.8 1909,396.3 1912,402.5 1915,410.2 1918,409.1 1921,408.7 1924,400.5 1927,391.5 1930,384.7 1933,380.6 1936,378.9 1939,380.3 1942,383.1 1945,384.9 1948,387.0 1951,394.2 1954,404.9 1957,413.6 1960,415.2 1963,415.1 1966,408.2 1969,397.1 1972,389.7 1975,387.7 1978,385.8 1981,380.7 1984,379.7 1987,380.4 1990,387.4 1993,395.3 1996,405.4 1999,413.1 2002,413.3 2005,411.8 2008,405.3 2011,400.1 2014,395.9 2017,387.1 2020,379.0 2023,372.1 2026,367.0 2029,364.7 2032,369.4 2035,380.0 2038,392.2 2041,401.0 2044,404.9 2047,406.3 2050,409.7 2053,406.8 2056,403.3 2059,399.0 2062,391.3 2065,380.0 2068,370.2 2071,365.3 2074,367.5 2077,376.0 2080,386.2 2083,395.1 2086,403.5 2089,408.8 2092,413.6 2095,416.5 2098,419.3 2101,417.8 2104,408.8 2107,395.4 2110,385.3 2113,376.3 2116,371.3 2119,372.5 2122,380.4 2125,387.7 2128,393.4 2131,398.3 2134,406.2 2137,414.1 2140,418.9 2143,412.0 2146,407.6 2149,400.2 2152,388.0 2155,379.2" fill="none" stroke="#00e800" stroke-width="1.45" stroke-linejoin="round"/><line x1="996" y1="463.5" x2="2160" y2="463.5" stroke="#212121" stroke-width="1"/><text x="1001" y="537" font-family="Liberation Mono" font-size="11.5" fill="#7a7a7a">E9</text><polyline points="1033,547.9 1036,539.1 1039,524.8 1042,510.8 1045,506.3 1048,507.3 1051,513.0 1054,520.7 1057,528.4 1060,532.7 1063,538.5 1066,547.2 1069,555.7 1072,557.7 1075,555.1 1078,547.2 1081,540.2 1084,530.0 1087,521.1 1090,520.0 1093,522.2 1096,525.0 1099,525.6 1102,529.0 1105,538.7 1108,548.9 1111,557.1 1114,564.2 1117,556.0 1120,541.7 1123,528.7 1126,523.3 1129,516.1 1132,510.7 1135,508.4 1138,511.5 1141,516.1 1144,528.1 1147,543.1 1150,554.2 1153,554.9 1156,542.3 1159,538.0 1162,534.1 1165,528.5 1168,523.5 1171,519.8 1174,513.5 1177,507.6 1180,511.0 1183,522.4 1186,536.4 1189,544.0 1192,549.1 1195,549.2 1198,553.0 1201,550.3 1204,545.0 1207,533.1 1210,518.5 1213,509.3 1216,510.0 1219,517.0 1222,529.9 1225,542.6 1228,549.8 1231,552.7 1234,555.7 1237,560.4 1240,558.0 1243,549.4 1246,535.4 1249,520.8 1252,508.3 1255,505.4 1258,511.7 1261,519.1 1264,524.1 1267,533.1 1270,542.8 1273,549.9 1276,554.6 1279,554.4 1282,542.2 1285,525.7 1288,513.9 1291,508.1 1294,507.2 1297,509.4 1300,513.0 1303,520.2 1306,526.8 1309,537.8 1312,552.0 1315,561.1 1318,554.5 1321,548.6 1324,540.4 1327,533.9 1330,526.7 1333,524.9 1336,524.0 1339,523.1 1342,518.6 1345,524.0 1348,534.2 1351,545.8 1354,554.3 1357,558.0 1360,558.2 1363,549.8 1366,541.8 1369,537.5 1372,530.9 1375,523.0 1378,513.8 1381,512.0 1384,512.8 1387,521.7 1390,535.4 1393,544.6 1396,547.5 1399,544.4 1402,546.9 1405,544.6 1408,539.6 1411,530.4 1414,519.1 1417,506.3 1420,499.6 1423,504.0 1426,516.2 1429,528.6 1432,538.3 1435,544.6 1438,549.7 1441,547.2 1444,549.1 1447,547.1 1450,535.8 1453,521.9 1456,516.6 1459,516.5 1462,521.8 1465,529.3 1468,536.7 1471,538.9 1474,545.7 1477,554.0 1480,563.9 1483,558.2 1486,546.7 1489,533.0 1492,520.7 1495,515.3 1498,517.4 1501,519.2 1504,518.9 1507,524.2 1510,533.5 1513,544.1 1516,551.6 1519,555.8 1522,552.0 1525,540.4 1528,527.4 1531,520.8 1534,516.5 1537,512.6 1540,508.2 1543,508.2 1546,513.4 1549,522.9 1552,537.5 1555,550.8 1558,555.2 1561,555.1 1564,550.0 1567,542.0 1570,533.6 1573,526.6 1576,519.9 1579,511.4 1582,505.3 1585,511.5 1588,525.4 1591,540.1 1594,552.0 1597,559.9 1600,561.4 1603,554.3 1606,552.4 1609,549.7 1612,541.2 1615,527.8 1618,514.7 1621,510.2 1624,510.4 1627,518.8 1630,530.4 1633,541.1 1636,543.3 1639,546.6 1642,549.4 1645,554.6 1648,550.4 1651,537.7 1654,524.6 1657,510.0 1660,500.3 1663,500.8 1666,510.6 1669,518.0 1672,523.7 1675,532.3 1678,542.6 1681,549.8 1684,550.9 1687,554.2 1690,545.7 1693,532.2 1696,522.3 1699,518.5 1702,516.9 1705,517.5 1708,521.4 1711,527.1 1714,531.9 1717,539.6 1720,554.1 1723,561.8 1726,565.0 1729,556.0 1732,546.6 1735,535.2 1738,524.3 1741,520.7 1744,517.0 1747,514.2 1750,511.8 1753,520.2 1756,535.3 1759,547.2 1762,557.1 1765,559.7 1768,550.4 1771,539.6 1774,534.1 1777,530.3 1780,521.8 1783,511.3 1786,505.4 1789,505.0 1792,510.9 1795,521.6 1798,536.3 1801,545.5 1804,547.5 1807,546.8 1810,549.8 1813,546.8 1816,539.6 1819,529.4 1822,517.2 1825,506.1 1828,503.9 1831,511.5 1834,524.3 1837,536.5 1840,544.7 1843,554.3 1846,557.7 1849,552.6 1852,554.6 1855,551.7 1858,542.4 1861,527.8 1864,519.0 1867,517.9 1870,518.4 1873,524.2 1876,531.9 1879,534.8 1882,537.2 1885,543.7 1888,551.1 1891,561.2 1894,554.3 1897,540.1 1900,526.5 1903,513.7 1906,506.2 1909,508.3 1912,510.2 1915,511.2 1918,518.0 1921,530.7 1924,543.4 1927,554.2 1930,553.3 1933,547.3 1936,535.0 1939,526.8 1942,523.3 1945,519.9 1948,517.2 1951,515.1 1954,518.7 1957,523.5 1960,536.6 1963,550.3 1966,558.4 1969,557.5 1972,555.3 1975,549.5 1978,541.2 1981,534.5 1984,527.8 1987,521.1 1990,512.8 1993,510.5 1996,519.7 1999,532.6 2002,543.1 2005,551.4 2008,554.0 2011,553.0 2014,548.2 2017,545.6 2020,542.4 2023,534.7 2026,521.3 2029,510.5 2032,503.4 2035,505.6 2038,512.2 2041,524.9 2044,536.4 2047,539.5 2050,542.3 2053,544.7 2056,546.4 2059,542.4 2062,534.1 2065,522.5 2068,511.2 2071,509.6 2074,515.2 2077,524.2 2080,527.6 2083,532.4 2086,538.9 2089,547.1 2092,553.4 2095,564.0 2098,562.1 2101,553.1 2104,537.5 2107,524.5 2110,519.7 2113,515.3 2116,515.9 2119,519.4 2122,524.9 2125,528.9 2128,539.1 2131,553.6 2134,562.4 2137,557.6 2140,550.9 2143,539.5 2146,529.6 2149,521.0 2152,517.6 2155,514.9" fill="none" stroke="#00e800" stroke-width="1.45" stroke-linejoin="round"/><line x1="996" y1="602.5" x2="2160" y2="602.5" stroke="#212121" stroke-width="1"/><text x="1001" y="677" font-family="Liberation Mono" font-size="11.5" fill="#7a7a7a">E10</text><polyline points="1033,687.5 1036,678.2 1039,662.9 1042,649.4 1045,642.2 1048,642.2 1051,645.7 1054,652.3 1057,662.0 1060,670.4 1063,677.6 1066,680.1 1069,683.7 1072,688.1 1075,694.4 1078,695.2 1081,690.2 1084,679.9 1087,668.8 1090,657.7 1093,648.0 1096,642.6 1099,641.7 1102,646.1 1105,653.4 1108,658.1 1111,664.5 1114,671.4 1117,683.4 1120,693.8 1123,701.3 1126,697.9 1129,696.9 1132,688.8 1135,675.9 1138,667.4 1141,662.2 1144,662.6 1147,661.3 1150,659.4 1153,660.7 1156,663.3 1159,667.1 1162,673.4 1165,683.3 1168,693.0 1171,701.9 1174,703.8 1177,699.3 1180,690.7 1183,684.5 1186,677.1 1189,671.7 1192,665.9 1195,660.8 1198,657.6 1201,653.6 1204,650.0 1207,649.7 1210,657.7 1213,671.2 1216,680.8 1219,687.4 1222,690.3 1225,689.2 1228,686.7 1231,679.6 1234,675.4 1237,671.4 1240,665.5 1243,655.5 1246,644.1 1249,640.4 1252,643.1 1255,648.8 1258,660.5 1261,673.6 1264,685.6 1267,691.0 1270,690.4 1273,691.6 1276,689.7 1279,691.1 1282,687.0 1285,678.5 1288,670.0 1291,660.6 1294,653.1 1297,650.2 1300,654.8 1303,664.4 1306,673.1 1309,677.9 1312,682.6 1315,686.1 1318,690.7 1321,695.1 1324,699.7 1327,699.9 1330,698.9 1333,692.3 1336,679.7 1339,666.0 1342,654.5 1345,651.1 1348,651.1 1351,652.3 1354,656.1 1357,660.4 1360,666.6 1363,671.5 1366,677.0 1369,685.5 1372,694.4 1375,701.3 1378,695.7 1381,685.0 1384,671.7 1387,659.3 1390,650.3 1393,644.0 1396,644.2 1399,646.1 1402,647.6 1405,648.2 1408,655.5 1411,668.7 1414,682.7 1417,694.0 1420,701.1 1423,697.8 1426,694.9 1429,686.7 1432,678.4 1435,672.1 1438,668.3 1441,666.8 1444,660.1 1447,655.0 1450,653.5 1453,655.3 1456,661.1 1459,671.3 1462,681.7 1465,694.0 1468,701.3 1471,702.1 1474,696.5 1477,691.7 1480,689.6 1483,685.0 1486,678.3 1489,671.5 1492,664.4 1495,656.3 1498,649.5 1501,647.2 1504,653.5 1507,664.8 1510,674.2 1513,681.2 1516,686.3 1519,687.7 1522,689.3 1525,693.9 1528,691.0 1531,688.0 1534,681.9 1537,669.4 1540,655.4 1543,642.1 1546,636.0 1549,636.4 1552,641.8 1555,651.7 1558,662.7 1561,672.8 1564,680.1 1567,685.2 1570,691.1 1573,695.2 1576,697.3 1579,692.8 1582,682.8 1585,671.2 1588,661.3 1591,651.2 1594,648.4 1597,652.5 1600,658.4 1603,663.3 1606,668.3 1609,672.7 1612,678.6 1615,688.7 1618,697.9 1621,704.4 1624,700.9 1627,700.6 1630,693.7 1633,684.0 1636,672.1 1639,665.1 1642,663.7 1645,663.2 1648,661.8 1651,659.5 1654,659.5 1657,662.4 1660,666.2 1663,673.5 1666,683.7 1669,692.0 1672,695.6 1675,694.8 1678,685.1 1681,676.6 1684,668.8 1687,662.8 1690,657.6 1693,653.9 1696,648.6 1699,645.5 1702,643.5 1705,649.3 1708,660.6 1711,674.9 1714,685.1 1717,689.3 1720,693.3 1723,693.5 1726,688.6 1729,683.0 1732,679.4 1735,676.5 1738,668.8 1741,659.6 1744,649.4 1747,645.8 1750,647.3 1753,653.3 1756,663.0 1759,676.5 1762,688.8 1765,695.4 1768,697.6 1771,697.8 1774,693.3 1777,695.3 1780,692.9 1783,688.0 1786,679.6 1789,671.1 1792,660.7 1795,653.3 1798,651.0 1801,657.6 1804,664.9 1807,672.4 1810,675.2 1813,678.2 1816,681.3 1819,686.3 1822,688.2 1825,693.2 1828,692.0 1831,687.3 1834,677.2 1837,662.8 1840,650.9 1843,645.3 1846,645.3 1849,649.0 1852,651.0 1855,655.3 1858,661.0 1861,666.5 1864,672.6 1867,678.8 1870,689.9 1873,696.1 1876,698.9 1879,692.1 1882,680.8 1885,669.8 1888,661.5 1891,654.6 1894,651.5 1897,651.9 1900,655.2 1903,655.8 1906,657.9 1909,663.7 1912,676.7 1915,689.7 1918,699.0 1921,704.7 1924,708.1 1927,703.7 1930,693.9 1933,683.1 1936,675.4 1939,669.5 1942,664.9 1945,656.9 1948,650.8 1951,649.9 1954,650.5 1957,658.1 1960,668.9 1963,682.1 1966,694.9 1969,701.3 1972,701.5 1975,693.9 1978,688.9 1981,685.3 1984,677.9 1987,672.0 1990,662.6 1993,655.1 1996,646.0 1999,640.6 2002,638.2 2005,647.5 2008,660.2 2011,672.3 2014,680.0 2017,685.7 2020,689.4 2023,689.2 2026,691.0 2029,688.1 2032,684.4 2035,677.2 2038,662.3 2041,648.1 2044,641.4 2047,642.6 2050,646.8 2053,656.1 2056,666.3 2059,677.3 2062,684.3 2065,689.1 2068,694.0 2071,700.9 2074,702.3 2077,701.2 2080,695.3 2083,684.7 2086,673.4 2089,663.4 2092,656.2 2095,652.0 2098,656.7 2101,661.5 2104,666.5 2107,667.6 2110,673.4 2113,679.8 2116,689.7 2119,695.2 2122,699.5 2125,699.8 2128,693.9 2131,683.2 2134,670.4 2137,660.5 2140,654.3 2143,652.4 2146,650.9 2149,650.5 2152,649.3 2155,653.4" fill="none" stroke="#00e800" stroke-width="1.45" stroke-linejoin="round"/><line x1="996" y1="742.5" x2="2160" y2="742.5" stroke="#212121" stroke-width="1"/><text x="1001" y="817" font-family="Liberation Mono" font-size="11.5" fill="#e040fb">E11</text><polyline points="1033,817.6 1036,821.2 1039,828.0 1042,827.6 1045,827.4 1048,819.5 1051,811.3 1054,806.5 1057,801.7 1060,799.8 1063,799.7 1066,800.7 1069,800.4 1072,802.1 1075,804.5 1078,814.1 1081,821.3 1084,824.5 1087,828.8 1090,825.7 1093,820.3 1096,814.1 1099,807.8 1102,805.9 1105,804.4 1108,799.5 1111,797.8 1114,799.8 1117,804.8 1120,812.2 1123,822.5 1126,830.7 1129,833.5 1132,832.0 1135,828.6 1138,825.2 1141,819.9 1144,814.0 1147,806.5 1150,800.3 1153,796.4 1156,796.8 1159,803.3 1162,812.4 1165,820.7 1168,825.0 1171,827.9 1174,827.7 1177,826.4 1180,821.3 1183,818.2 1186,807.8 1189,797.6 1192,791.4 1195,791.8 1198,795.4 1201,802.4 1204,808.8 1207,814.2 1210,818.7 1213,821.5 1216,826.0 1219,826.6 1222,824.6 1225,817.1 1228,807.4 1231,800.3 1234,797.1 1237,796.4 1240,799.3 1243,804.0 1246,809.1 1249,811.1 1252,814.5 1255,820.4 1258,828.6 1261,832.4 1264,833.3 1267,831.3 1270,826.9 1273,819.8 1276,811.4 1279,806.9 1282,804.7 1285,805.4 1288,803.9 1291,803.2 1294,804.6 1297,809.1 1300,813.1 1303,820.3 1306,826.6 1309,831.9 1312,830.3 1315,825.3 1318,817.4 1321,813.3 1324,808.3 1327,803.2 1330,800.7 1333,797.2 1336,795.8 1339,795.4 1342,799.9 1345,808.3 1348,818.0 1351,823.0 1354,825.0 1357,822.8 1360,818.9 1363,816.2 1366,813.5 1369,811.1 1372,808.3 1375,802.1 1378,798.6 1381,796.8 1384,801.7 1387,808.4 1390,817.2 1393,823.8 1396,825.6 1399,824.6 1402,828.1 1405,829.7 1408,824.1 1411,816.3 1414,807.4 1417,800.7 1420,796.7 1423,797.8 1426,805.1 1429,812.4 1432,815.6 1435,820.0 1438,823.1 1441,826.9 1444,829.8 1447,829.1 1450,828.1 1453,823.6 1456,816.4 1459,806.4 1462,798.5 1465,794.5 1468,796.4 1471,798.3 1474,801.2 1477,806.0 1480,808.9 1483,814.5 1486,820.2 1489,827.1 1492,827.2 1495,824.6 1498,815.1 1501,808.1 1504,802.3 1507,799.3 1510,799.3 1513,799.6 1516,801.1 1519,803.5 1522,809.0 1525,819.1 1528,826.8 1531,831.8 1534,832.6 1537,828.1 1540,819.1 1543,813.2 1546,809.0 1549,807.9 1552,803.4 1555,800.5 1558,799.7 1561,804.5 1564,810.9 1567,818.1 1570,824.8 1573,831.6 1576,831.6 1579,827.6 1582,823.0 1585,821.2 1588,817.9 1591,814.0 1594,809.6 1597,803.9 1600,800.1 1603,795.2 1606,794.0 1609,798.1 1612,807.9 1615,816.0 1618,819.6 1621,821.0 1624,822.7 1627,820.1 1630,819.6 1633,815.3 1636,810.6 1639,800.4 1642,794.0 1645,795.1 1648,799.9 1651,805.5 1654,810.3 1657,815.1 1660,819.1 1663,822.7 1666,825.5 1669,828.3 1672,828.3 1675,825.1 1678,816.8 1681,809.9 1684,804.9 1687,803.0 1690,802.7 1693,806.9 1696,809.3 1699,812.0 1702,813.1 1705,817.8 1708,823.5 1711,829.7 1714,832.2 1717,830.7 1720,825.5 1723,817.0 1726,808.1 1729,802.2 1732,800.7 1735,800.8 1738,798.6 1741,798.7 1744,802.6 1747,806.5 1750,813.0 1753,820.8 1756,827.3 1759,828.4 1762,823.9 1765,817.3 1768,811.2 1771,808.5 1774,802.8 1777,800.3 1780,798.2 1783,796.2 1786,795.2 1789,798.3 1792,807.3 1795,817.4 1798,824.9 1801,827.6 1804,829.2 1807,826.7 1810,822.1 1813,819.1 1816,817.5 1819,812.4 1822,807.7 1825,801.9 1828,797.9 1831,800.9 1834,806.6 1837,814.0 1840,822.4 1843,827.7 1846,827.9 1849,827.1 1852,824.3 1855,825.0 1858,820.4 1861,813.9 1864,807.1 1867,801.2 1870,798.5 1873,798.4 1876,803.9 1879,808.8 1882,812.1 1885,814.2 1888,814.6 1891,819.3 1894,821.5 1897,825.0 1900,823.9 1903,821.4 1906,814.4 1909,804.7 1912,795.8 1915,794.3 1918,794.1 1921,798.0 1924,801.1 1927,806.3 1930,811.0 1933,814.8 1936,822.7 1939,829.2 1942,831.4 1945,827.2 1948,821.2 1951,813.2 1954,808.3 1957,805.1 1960,803.8 1963,803.4 1966,806.0 1969,805.9 1972,809.3 1975,815.6 1978,824.3 1981,830.5 1984,832.0 1987,832.0 1990,828.2 1993,819.6 1996,812.8 1999,810.2 2002,807.3 2005,803.2 2008,797.8 2011,796.0 2014,798.9 2017,805.6 2020,812.0 2023,820.9 2026,825.6 2029,827.1 2032,824.0 2035,820.5 2038,816.4 2041,814.7 2044,808.7 2047,801.9 2050,797.5 2053,793.3 2056,792.3 2059,796.9 2062,805.4 2065,815.2 2068,820.1 2071,823.7 2074,824.3 2077,828.1 2080,825.3 2083,823.5 2086,818.1 2089,810.1 2092,799.9 2095,794.8 2098,796.3 2101,800.4 2104,805.6 2107,812.1 2110,818.9 2113,822.9 2116,826.3 2119,828.6 2122,832.7 2125,829.3 2128,829.7 2131,824.2 2134,817.2 2137,811.4 2140,805.5 2143,801.0 2146,799.4 2149,803.0 2152,806.0 2155,809.0" fill="none" stroke="#00e800" stroke-width="1.45" stroke-linejoin="round"/><line x1="996" y1="882.5" x2="2160" y2="882.5" stroke="#212121" stroke-width="1"/><text x="1001" y="957" font-family="Liberation Mono" font-size="11.5" fill="#7a7a7a">E12</text><polyline points="1033,939.5 1036,935.6 1039,939.7 1042,951.5 1045,960.4 1048,964.9 1051,968.3 1054,968.9 1057,968.2 1060,965.7 1063,962.3 1066,953.4 1069,940.8 1072,933.0 1075,931.1 1078,934.5 1081,941.1 1084,949.6 1087,955.8 1090,957.3 1093,963.4 1096,971.2 1099,968.9 1102,959.5 1105,948.4 1108,937.1 1111,930.5 1114,932.1 1117,937.5 1120,941.3 1123,945.4 1126,955.0 1129,964.1 1132,973.2 1135,976.1 1138,976.0 1141,968.1 1144,956.7 1147,947.9 1150,943.3 1153,941.4 1156,939.2 1159,939.8 1162,944.8 1165,948.9 1168,959.1 1171,969.5 1174,976.6 1177,978.7 1180,968.4 1183,962.6 1186,955.6 1189,951.3 1192,944.8 1195,942.3 1198,936.9 1201,934.0 1204,934.4 1207,944.0 1210,956.2 1213,964.1 1216,966.5 1219,965.7 1222,960.3 1225,955.3 1228,951.4 1231,945.9 1234,935.8 1237,931.1 1240,931.9 1243,937.6 1246,945.6 1249,956.8 1252,963.6 1255,965.9 1258,965.4 1261,966.2 1264,967.6 1267,965.8 1270,958.9 1273,950.8 1276,943.6 1279,938.1 1282,939.3 1285,946.6 1288,954.1 1291,958.1 1294,961.4 1297,965.7 1300,969.4 1303,972.9 1306,973.1 1309,967.0 1312,954.6 1315,942.0 1318,935.9 1321,935.8 1324,935.6 1327,940.2 1330,946.5 1333,949.7 1336,956.7 1339,967.5 1342,968.6 1345,963.2 1348,955.1 1351,948.7 1354,941.8 1357,938.2 1360,939.2 1363,940.4 1366,939.8 1369,941.8 1372,951.4 1375,962.7 1378,969.2 1381,972.0 1384,966.9 1387,958.5 1390,952.9 1393,950.0 1396,947.7 1399,941.4 1402,940.2 1405,942.7 1408,948.4 1411,958.8 1414,968.5 1417,972.5 1420,971.5 1423,969.8 1426,966.2 1429,961.0 1432,953.8 1435,946.4 1438,937.4 1441,930.5 1444,931.3 1447,938.9 1450,950.4 1453,957.7 1456,963.9 1459,965.6 1462,960.3 1465,959.3 1468,958.7 1471,956.3 1474,947.5 1477,938.1 1480,933.3 1483,933.8 1486,939.6 1489,944.9 1492,951.5 1495,955.6 1498,958.8 1501,962.0 1504,971.7 1507,972.4 1510,965.6 1513,954.7 1516,944.6 1519,938.6 1522,937.2 1525,940.8 1528,946.6 1531,948.9 1534,953.7 1537,962.8 1540,971.3 1543,975.9 1546,976.9 1549,970.4 1552,960.5 1555,949.4 1558,943.3 1561,942.8 1564,938.9 1567,938.0 1570,941.1 1573,945.4 1576,952.2 1579,961.2 1582,970.9 1585,970.2 1588,965.3 1591,958.7 1594,950.9 1597,944.5 1600,940.7 1603,937.8 1606,933.8 1609,932.0 1612,935.6 1615,946.5 1618,957.2 1621,964.7 1624,969.6 1627,965.8 1630,961.9 1633,958.6 1636,956.1 1639,952.4 1642,944.1 1645,937.3 1648,937.1 1651,941.6 1654,950.1 1657,961.0 1660,967.6 1663,969.4 1666,967.6 1669,968.2 1672,966.8 1675,961.1 1678,953.6 1681,945.0 1684,937.3 1687,936.9 1690,943.4 1693,950.1 1696,952.8 1699,956.3 1702,960.3 1705,962.6 1708,970.3 1711,970.8 1714,966.0 1717,955.2 1720,943.5 1723,934.1 1726,929.1 1729,931.2 1732,933.5 1735,938.5 1738,945.4 1741,952.0 1744,962.4 1747,971.4 1750,972.6 1753,966.9 1756,958.6 1759,948.8 1762,941.7 1765,938.6 1768,939.2 1771,939.4 1774,940.8 1777,945.6 1780,956.4 1783,967.7 1786,974.5 1789,977.9 1792,976.5 1795,968.5 1798,959.6 1801,954.6 1804,950.0 1807,944.4 1810,938.5 1813,935.2 1816,936.9 1819,944.1 1822,952.8 1825,965.7 1828,972.1 1831,971.0 1834,960.8 1837,958.9 1840,956.9 1843,950.5 1846,944.6 1849,939.6 1852,932.5 1855,932.0 1858,938.4 1861,950.1 1864,955.3 1867,958.6 1870,962.0 1873,966.1 1876,965.4 1879,963.0 1882,956.6 1885,943.5 1888,933.9 1891,931.8 1894,937.4 1897,945.4 1900,956.0 1903,962.8 1906,966.9 1909,972.5 1912,973.4 1915,969.3 1918,960.3 1921,950.9 1924,941.4 1927,940.1 1930,943.5 1933,948.2 1936,948.3 1939,952.8 1942,959.4 1945,964.7 1948,969.8 1951,969.3 1954,963.8 1957,953.6 1960,945.1 1963,940.4 1966,939.2 1969,937.1 1972,937.6 1975,938.8 1978,942.3 1981,948.8 1984,958.8 1987,967.9 1990,970.4 1993,965.2 1996,958.9 1999,952.8 2002,947.6 2005,943.4 2008,940.9 2011,937.6 2014,934.8 2017,940.1 2020,948.6 2023,959.2 2026,968.4 2029,971.1 2032,973.5 2035,971.6 2038,967.9 2041,963.5 2044,961.3 2047,956.5 2050,947.8 2053,938.6 2056,936.1 2059,936.7 2062,944.4 2065,953.5 2068,962.0 2071,966.4 2074,967.3 2077,964.1 2080,965.6 2083,962.9 2086,955.7 2089,948.9 2092,939.2 2095,934.0 2098,933.2 2101,939.9 2104,947.2 2107,950.4 2110,954.7 2113,958.8 2116,962.1 2119,968.1 2122,966.2 2125,956.4 2128,943.3 2131,935.9 2134,933.5 2137,936.4 2140,940.5 2143,946.3 2146,952.0 2149,957.8 2152,966.5 2155,975.4" fill="none" stroke="#00e800" stroke-width="1.45" stroke-linejoin="round"/><line x1="996" y1="1022.5" x2="2160" y2="1022.5" stroke="#212121" stroke-width="1"/><text x="1001" y="1097" font-family="Liberation Mono" font-size="11.5" fill="#7a7a7a">E13</text><polyline points="1033,1067.5 1036,1075.4 1039,1082.8 1042,1089.5 1045,1095.7 1048,1102.0 1051,1107.1 1054,1108.5 1057,1114.4 1060,1115.8 1063,1111.2 1066,1099.8 1069,1086.9 1072,1077.5 1075,1072.2 1078,1069.5 1081,1072.0 1084,1078.3 1087,1084.5 1090,1090.1 1093,1096.3 1096,1101.3 1099,1110.8 1102,1121.1 1105,1125.4 1108,1119.9 1111,1114.5 1114,1105.9 1117,1097.3 1120,1087.7 1123,1081.7 1126,1080.0 1129,1080.9 1132,1080.2 1135,1079.6 1138,1081.9 1141,1087.5 1144,1094.2 1147,1102.5 1150,1110.1 1153,1115.3 1156,1118.2 1159,1108.9 1162,1098.2 1165,1089.6 1168,1084.0 1171,1077.5 1174,1071.6 1177,1066.9 1180,1065.1 1183,1065.1 1186,1071.2 1189,1080.4 1192,1094.7 1195,1108.1 1198,1113.1 1201,1113.0 1204,1110.9 1207,1107.4 1210,1101.3 1213,1096.6 1216,1090.4 1219,1083.5 1222,1075.9 1225,1067.7 1228,1066.6 1231,1069.7 1234,1079.9 1237,1090.8 1240,1101.9 1243,1109.6 1246,1115.6 1249,1118.4 1252,1118.9 1255,1110.9 1258,1111.6 1261,1110.9 1264,1106.5 1267,1098.0 1270,1088.0 1273,1079.9 1276,1075.1 1279,1074.5 1282,1076.2 1285,1081.8 1288,1090.6 1291,1096.7 1294,1100.1 1297,1102.2 1300,1103.6 1303,1107.5 1306,1117.4 1309,1117.0 1312,1111.7 1315,1102.9 1318,1093.1 1321,1081.2 1324,1069.2 1327,1063.6 1330,1064.0 1333,1067.8 1336,1072.9 1339,1076.8 1342,1082.8 1345,1090.0 1348,1099.8 1351,1107.2 1354,1114.9 1357,1114.9 1360,1113.4 1363,1102.6 1366,1091.4 1369,1083.1 1372,1077.4 1375,1075.6 1378,1073.7 1381,1075.2 1384,1079.1 1387,1080.7 1390,1086.4 1393,1092.5 1396,1105.1 1399,1116.9 1402,1123.0 1405,1124.6 1408,1120.2 1411,1113.3 1414,1104.8 1417,1095.7 1420,1088.2 1423,1083.3 1426,1080.7 1429,1075.7 1432,1071.4 1435,1073.9 1438,1081.3 1441,1094.9 1444,1105.6 1447,1115.6 1450,1120.7 1453,1115.6 1456,1109.1 1459,1102.2 1462,1097.5 1465,1091.0 1468,1082.4 1471,1072.8 1474,1065.6 1477,1062.8 1480,1065.6 1483,1071.2 1486,1081.4 1489,1094.0 1492,1102.1 1495,1105.9 1498,1107.7 1501,1107.8 1504,1105.9 1507,1104.3 1510,1102.4 1513,1096.7 1516,1091.5 1519,1084.7 1522,1075.9 1525,1069.6 1528,1068.0 1531,1073.4 1534,1081.9 1537,1089.6 1540,1094.4 1543,1100.8 1546,1106.3 1549,1108.8 1552,1111.8 1555,1115.4 1558,1117.3 1561,1112.9 1564,1103.8 1567,1092.3 1570,1083.3 1573,1080.0 1576,1078.4 1579,1078.5 1582,1082.9 1585,1088.7 1588,1091.4 1591,1095.3 1594,1099.6 1597,1105.9 1600,1114.4 1603,1119.2 1606,1115.0 1609,1108.5 1612,1097.3 1615,1086.6 1618,1076.9 1621,1072.8 1624,1073.7 1627,1073.8 1630,1073.1 1633,1074.1 1636,1076.8 1639,1084.8 1642,1094.7 1645,1102.4 1648,1111.2 1651,1113.7 1654,1111.2 1657,1103.4 1660,1095.2 1663,1089.2 1666,1085.2 1669,1080.7 1672,1076.6 1675,1073.7 1678,1071.4 1681,1073.4 1684,1076.7 1687,1083.1 1690,1095.3 1693,1107.4 1696,1116.0 1699,1116.1 1702,1111.7 1705,1108.0 1708,1106.8 1711,1102.6 1714,1098.9 1717,1094.7 1720,1090.3 1723,1084.4 1726,1079.0 1729,1076.0 1732,1080.3 1735,1086.4 1738,1094.3 1741,1100.6 1744,1106.9 1747,1109.0 1750,1109.5 1753,1108.3 1756,1113.1 1759,1110.7 1762,1108.4 1765,1101.6 1768,1091.3 1771,1078.9 1774,1069.6 1777,1064.2 1780,1063.1 1783,1066.5 1786,1074.4 1789,1085.4 1792,1093.8 1795,1097.4 1798,1100.8 1801,1107.8 1804,1109.2 1807,1110.0 1810,1105.6 1813,1099.6 1816,1089.6 1819,1078.2 1822,1069.5 1825,1067.5 1828,1071.2 1831,1076.7 1834,1080.9 1837,1085.4 1840,1091.8 1843,1099.7 1846,1107.2 1849,1114.6 1852,1119.7 1855,1119.0 1858,1111.9 1861,1101.0 1864,1090.2 1867,1085.8 1870,1082.4 1873,1079.8 1876,1079.4 1879,1082.3 1882,1084.4 1885,1086.4 1888,1090.7 1891,1098.9 1894,1108.9 1897,1117.3 1900,1120.7 1903,1121.2 1906,1115.8 1909,1108.4 1912,1099.7 1915,1089.7 1918,1083.5 1921,1081.0 1924,1076.9 1927,1072.3 1930,1067.4 1933,1067.9 1936,1073.0 1939,1084.0 1942,1092.8 1945,1104.1 1948,1109.3 1951,1112.6 1954,1106.5 1957,1101.3 1960,1095.5 1963,1094.1 1966,1092.4 1969,1086.1 1972,1079.3 1975,1072.6 1978,1069.3 1981,1068.4 1984,1072.6 1987,1081.8 1990,1092.7 1993,1101.5 1996,1106.8 1999,1107.9 2002,1108.1 2005,1109.5 2008,1110.0 2011,1106.8 2014,1103.3 2017,1098.8 2020,1090.4 2023,1081.0 2026,1075.6 2029,1074.3 2032,1081.5 2035,1088.6 2038,1093.9 2041,1100.0 2044,1103.9 2047,1108.5 2050,1110.5 2053,1115.8 2056,1116.4 2059,1114.5 2062,1107.3 2065,1092.7 2068,1080.8 2071,1073.0 2074,1070.1 2077,1070.8 2080,1075.1 2083,1079.2 2086,1084.0 2089,1088.5 2092,1091.1 2095,1099.1 2098,1107.7 2101,1114.2 2104,1109.6 2107,1106.2 2110,1098.8 2113,1091.0 2116,1080.8 2119,1075.2 2122,1072.4 2125,1074.7 2128,1076.8 2131,1074.9 2134,1075.8 2137,1081.9 2140,1089.5 2143,1097.3 2146,1105.9 2149,1113.0 2152,1116.2 2155,1115.0" fill="none" stroke="#00e800" stroke-width="1.45" stroke-linejoin="round"/><line x1="996" y1="1162.5" x2="2160" y2="1162.5" stroke="#212121" stroke-width="1"/><text x="1001" y="1237" font-family="Liberation Mono" font-size="11.5" fill="#7a7a7a">E14</text><polyline points="1033,1227.5 1036,1213.8 1039,1206.9 1042,1205.8 1045,1208.9 1048,1214.8 1051,1225.7 1054,1231.6 1057,1237.2 1060,1245.1 1063,1255.4 1066,1262.4 1069,1258.7 1072,1249.5 1075,1238.2 1078,1227.7 1081,1218.3 1084,1217.2 1087,1218.5 1090,1220.8 1093,1222.2 1096,1226.3 1099,1235.2 1102,1246.0 1105,1256.0 1108,1261.4 1111,1260.4 1114,1254.7 1117,1242.5 1120,1231.5 1123,1226.5 1126,1222.5 1129,1217.5 1132,1213.4 1135,1211.0 1138,1213.2 1141,1216.4 1144,1225.8 1147,1238.1 1150,1250.2 1153,1252.1 1156,1251.0 1159,1245.9 1162,1240.7 1165,1232.0 1168,1225.4 1171,1220.1 1174,1213.3 1177,1206.6 1180,1202.8 1183,1205.4 1186,1217.8 1189,1231.3 1192,1243.2 1195,1251.5 1198,1255.7 1201,1255.8 1204,1249.4 1207,1247.9 1210,1247.2 1213,1240.9 1216,1228.5 1219,1219.5 1222,1213.4 1225,1213.5 1228,1217.2 1231,1226.9 1234,1239.0 1237,1246.9 1240,1249.3 1243,1251.8 1246,1255.9 1249,1254.8 1252,1253.1 1255,1247.8 1258,1237.6 1261,1227.6 1264,1217.3 1267,1210.7 1270,1214.0 1273,1219.0 1276,1224.7 1279,1226.5 1282,1230.8 1285,1237.1 1288,1241.6 1291,1246.7 1294,1253.8 1297,1249.3 1300,1235.0 1303,1221.2 1306,1213.6 1309,1209.7 1312,1210.4 1315,1210.5 1318,1215.1 1321,1219.1 1324,1223.5 1327,1232.1 1330,1244.7 1333,1256.1 1336,1259.0 1339,1255.2 1342,1247.3 1345,1238.0 1348,1231.1 1351,1224.3 1354,1222.8 1357,1222.4 1360,1219.8 1363,1217.9 1366,1220.8 1369,1230.9 1372,1242.9 1375,1252.4 1378,1259.8 1381,1260.9 1384,1257.6 1387,1247.9 1390,1242.2 1393,1238.2 1396,1230.9 1399,1222.8 1402,1213.2 1405,1208.5 1408,1209.3 1411,1213.7 1414,1225.1 1417,1237.8 1420,1247.3 1423,1250.1 1426,1246.7 1429,1241.5 1432,1240.6 1435,1238.5 1438,1234.1 1441,1227.4 1444,1218.9 1447,1210.4 1450,1204.7 1453,1208.3 1456,1219.4 1459,1227.2 1462,1233.8 1465,1238.5 1468,1242.8 1471,1244.7 1474,1247.6 1477,1248.9 1480,1246.9 1483,1237.1 1486,1224.2 1489,1217.1 1492,1217.3 1495,1220.0 1498,1225.6 1501,1231.8 1504,1237.0 1507,1240.1 1510,1243.5 1513,1251.5 1516,1257.1 1519,1267.2 1522,1260.0 1525,1248.4 1528,1234.2 1531,1221.9 1534,1212.5 1537,1211.3 1540,1213.3 1543,1214.8 1546,1215.7 1549,1222.4 1552,1234.7 1555,1246.6 1558,1256.4 1561,1260.9 1564,1251.8 1567,1241.6 1570,1229.7 1573,1222.9 1576,1218.4 1579,1215.3 1582,1210.4 1585,1209.0 1588,1210.7 1591,1214.7 1594,1225.2 1597,1236.8 1600,1249.4 1603,1253.1 1606,1251.6 1609,1246.2 1612,1241.9 1615,1237.2 1618,1232.3 1621,1228.3 1624,1223.0 1627,1216.2 1630,1211.4 1633,1215.6 1636,1225.4 1639,1237.5 1642,1248.8 1645,1254.4 1648,1256.1 1651,1252.2 1654,1250.3 1657,1248.7 1660,1244.5 1663,1237.1 1666,1224.1 1669,1215.9 1672,1213.4 1675,1214.2 1678,1222.2 1681,1230.5 1684,1238.1 1687,1242.3 1690,1241.3 1693,1243.4 1696,1252.1 1699,1251.6 1702,1246.7 1705,1237.1 1708,1224.4 1711,1211.6 1714,1203.8 1717,1202.7 1720,1208.7 1723,1217.4 1726,1221.3 1729,1228.2 1732,1235.4 1735,1245.1 1738,1251.8 1741,1258.6 1744,1256.5 1747,1246.6 1750,1231.5 1753,1219.5 1756,1212.8 1759,1212.0 1762,1211.9 1765,1216.4 1768,1222.7 1771,1228.5 1774,1235.6 1777,1248.9 1780,1261.4 1783,1267.4 1786,1259.6 1789,1252.7 1792,1243.8 1795,1235.6 1798,1229.1 1801,1225.7 1804,1223.9 1807,1220.5 1810,1216.5 1813,1216.7 1816,1225.0 1819,1234.8 1822,1244.5 1825,1250.6 1828,1253.5 1831,1253.0 1834,1246.4 1837,1237.6 1840,1231.7 1843,1228.3 1846,1220.4 1849,1211.5 1852,1206.0 1855,1204.6 1858,1208.7 1861,1217.7 1864,1229.9 1867,1242.5 1870,1247.4 1873,1247.4 1876,1246.6 1879,1247.0 1882,1244.3 1885,1239.1 1888,1233.3 1891,1224.8 1894,1214.8 1897,1207.9 1900,1207.9 1903,1217.5 1906,1227.8 1909,1236.6 1912,1243.1 1915,1250.4 1918,1254.6 1921,1255.1 1924,1259.0 1927,1258.1 1930,1251.6 1933,1239.1 1936,1225.0 1939,1214.0 1942,1211.1 1945,1213.3 1948,1217.5 1951,1227.1 1954,1233.2 1957,1238.1 1960,1243.7 1963,1253.0 1966,1257.9 1969,1255.8 1972,1248.2 1975,1235.1 1978,1223.4 1981,1212.9 1984,1207.8 1987,1209.5 1990,1211.6 1993,1212.2 1996,1216.6 1999,1224.2 2002,1233.7 2005,1244.5 2008,1252.5 2011,1252.7 2014,1248.7 2017,1239.8 2020,1229.8 2023,1225.7 2026,1222.2 2029,1220.5 2032,1217.2 2035,1215.5 2038,1216.3 2041,1222.1 2044,1230.2 2047,1245.2 2050,1255.5 2053,1258.1 2056,1254.7 2059,1249.4 2062,1246.2 2065,1239.6 2068,1235.0 2071,1230.5 2074,1223.5 2077,1216.0 2080,1214.1 2083,1221.4 2086,1232.0 2089,1240.4 2092,1247.7 2095,1251.3 2098,1251.5 2101,1252.9 2104,1248.6 2107,1245.3 2110,1240.4 2113,1229.6 2116,1214.7 2119,1204.9 2122,1201.1 2125,1203.2 2128,1212.1 2131,1222.4 2134,1233.7 2137,1239.7 2140,1242.6 2143,1246.0 2146,1245.9 2149,1246.3 2152,1243.5 2155,1236.3" fill="none" stroke="#00e800" stroke-width="1.45" stroke-linejoin="round"/></svg>
<div class="r" style="left:2185px;top:40px;width:2px;height:1342px;background:#00ff00;"></div>
<div class="r" style="left:2187px;top:39px;width:352px;height:1341px;background:#1b1b1b;"></div>
<div class="r" style="left:2206px;top:59px;width:314px;height:112px;background:#0a0a0a;border:1px solid #00ff00;border-radius:5px;"></div>
<div class="r" style="left:2212.3px;top:65.3px;width:72.5px;height:30.5px;background:#1b1b1b;border:1px solid #353535;border-radius:4px;"></div>
<div class="t" style="left:1748.55px;width:1000px;text-align:center;top:72.15px;font-size:14px;color:#00ff00;font-weight:400;font-family:'Liberation Sans', sans-serif;letter-spacing:-0.6px;">TcMEP</div>
<div class="r" style="left:2288.4px;top:65.3px;width:72.5px;height:30.5px;background:#1b1b1b;border:1px solid #353535;border-radius:4px;"></div>
<div class="t" style="left:1824.65px;width:1000px;text-align:center;top:72.15px;font-size:14px;color:#00ff00;font-weight:400;font-family:'Liberation Sans', sans-serif;letter-spacing:-0.6px;">EMG</div>
<div class="r" style="left:2365.3px;top:65.3px;width:72.5px;height:30.5px;background:#1b1b1b;border:1px solid #353535;border-radius:4px;"></div>
<div class="t" style="left:1901.55px;width:1000px;text-align:center;top:72.15px;font-size:14px;color:#00ff00;font-weight:400;font-family:'Liberation Sans', sans-serif;letter-spacing:-0.6px;">Trig</div>
<div class="r" style="left:2441.4px;top:65.3px;width:72.5px;height:30.5px;background:#1b1b1b;border:1px solid #353535;border-radius:4px;"></div>
<div class="t" style="left:1977.65px;width:1000px;text-align:center;top:72.15px;font-size:14px;color:#00ff00;font-weight:400;font-family:'Liberation Sans', sans-serif;letter-spacing:-0.6px;">SSEP</div>
<div class="r" style="left:2212.3px;top:100.2px;width:72.5px;height:30.5px;background:#1b1b1b;border:1px solid #353535;border-radius:4px;"></div>
<div class="t" style="left:1748.55px;width:1000px;text-align:center;top:107.05px;font-size:14px;color:#00ff00;font-weight:400;font-family:'Liberation Sans', sans-serif;letter-spacing:-0.6px;">D-Wave</div>
<div class="r" style="left:2288.4px;top:100.2px;width:72.5px;height:30.5px;background:#1b1b1b;border:1px solid #353535;border-radius:4px;"></div>
<div class="t" style="left:1824.65px;width:1000px;text-align:center;top:107.05px;font-size:14px;color:#00ff00;font-weight:400;font-family:'Liberation Sans', sans-serif;letter-spacing:-0.6px;">EEG</div>
<div class="r" style="left:2365.3px;top:100.2px;width:72.5px;height:30.5px;background:#1b1b1b;border:1px solid #353535;border-radius:4px;"></div>
<div class="t" style="left:1901.55px;width:1000px;text-align:center;top:107.05px;font-size:14px;color:#00ff00;font-weight:400;font-family:'Liberation Sans', sans-serif;letter-spacing:-0.6px;">BAEP</div>
<div class="r" style="left:2441.4px;top:100.2px;width:72.5px;height:30.5px;background:#1b1b1b;border:1px solid #353535;border-radius:4px;"></div>
<div class="t" style="left:1977.65px;width:1000px;text-align:center;top:107.05px;font-size:14px;color:#00ff00;font-weight:400;font-family:'Liberation Sans', sans-serif;letter-spacing:-0.6px;">VEP</div>
<div class="r" style="left:2212.3px;top:134.1px;width:72.5px;height:30.7px;background:#00ff00;border-radius:4px;"></div>
<div class="t" style="left:1748.50px;width:1000px;text-align:center;top:141.35px;font-size:14px;color:#000;font-weight:400;font-family:'Liberation Sans', sans-serif;letter-spacing:-0.35px;">Cortical</div>
<svg style="left:2204px;top:182px" width="26" height="24" viewBox="0 0 26 24"><path d="M14.2 17.6 L17.2 17.6 L16.6 20.6 Z" fill="#e8108a"/><path d="M4 12.3 C4 8.2 7.3 5 11.8 5 C16.5 5 20.1 8 20.1 12 C20.1 15.8 18 18 14.8 18 L11 18 C9.5 18 8.6 17.2 8.3 15.8 C5.8 15.8 4 14.4 4 12.3 Z" fill="#ff69c0"/><path d="M6.5 9.5 L8 10 M8.5 12.5 L10.5 12.3 M12.5 15 L16 15.2 M16.5 10.5 L18 12 M11.5 6.5 L13 6.5" stroke="#f0389e" stroke-width="0.9" fill="none"/></svg>
<div class="t" style="left:2230.80px;top:186.10px;font-size:16.3px;color:#e040fb;font-weight:700;font-family:'Liberation Sans', sans-serif;transform:scaleX(0.8884);transform-origin:0 0;">CORTICAL MAPPING</div>
<div class="t" style="left:2204.89px;top:216.09px;font-size:13px;color:#00ff00;font-weight:400;font-family:'Liberation Sans', sans-serif;transform:scaleX(0.9130);transform-origin:0 0;">SUB-MODE</div>
<div class="r" style="left:2206px;top:252px;width:314px;height:38px;background:#333;border:2px solid #f09a00;border-radius:4px;box-shadow:0 0 0 1.2px #fff;"></div>
<div class="t" style="left:1855.00px;width:1000px;text-align:center;top:262.61px;font-size:17px;color:#fff;font-weight:400;font-family:'Liberation Sans', sans-serif;">ECoG</div>
<svg style="left:2501px;top:267px" width="14" height="9" viewBox="0 0 14 9"><path d="M1.6 1.6L7 6.9L12.4 1.6" fill="none" stroke="#fff" stroke-width="2"/></svg>
<div class="t" style="left:2206.00px;top:314.62px;font-size:12.5px;color:#00ff00;font-weight:400;font-family:'Liberation Sans', sans-serif;transform:scaleX(0.9232);transform-origin:0 0;">GRID CONFIGURATION</div>
<div class="r" style="left:2206px;top:351px;width:314px;height:37px;background:#333;border:1px solid #585858;"></div>
<div class="t" style="left:1854.00px;width:1000px;text-align:center;top:360.61px;font-size:17px;color:#fff;font-weight:400;font-family:'Liberation Sans', sans-serif;">8×8 Grid</div>
<svg style="left:2501px;top:365px" width="14" height="9" viewBox="0 0 14 9"><path d="M1.6 1.6L7 6.9L12.4 1.6" fill="none" stroke="#fff" stroke-width="2"/></svg>
<div class="t" style="left:2206.00px;top:413.82px;font-size:12.5px;color:#00ff00;font-weight:400;font-family:'Liberation Sans', sans-serif;transform:scaleX(0.8592);transform-origin:0 0;">ACTIVE ELECTRODE</div>
<div class="t" style="left:2350.35px;top:439.80px;font-size:15px;color:#e040fb;font-weight:400;font-family:'Liberation Sans', sans-serif;transform:scaleX(0.9458);transform-origin:0 0;">E11</div>
<div class="t" style="left:2205.13px;top:469.32px;font-size:12.5px;color:#00ff00;font-weight:400;font-family:'Liberation Sans', sans-serif;transform:scaleX(0.8736);transform-origin:0 0;">ECOG STATUS</div>
<div class="t" style="left:2325.06px;top:495.68px;font-size:15.5px;color:#4caf50;font-weight:400;font-family:'Liberation Sans', sans-serif;transform:scaleX(1.0380);transform-origin:0 0;">Monitoring</div>
<div class="t" style="left:2206.00px;top:535.20px;font-size:15px;color:#ff9800;font-weight:400;font-family:'Liberation Sans', sans-serif;transform:scaleX(0.8955);transform-origin:0 0;">OLAYLARI SIMÜLE ET</div>
<div class="r" style="left:2206px;top:574px;width:314px;height:38px;background:#333;border:1px solid #585858;"></div>
<div class="t" style="left:2266.00px;top:584.13px;font-size:16.5px;color:#fff;font-weight:400;font-family:'Liberation Sans', sans-serif;transform:scaleX(1.0097);transform-origin:0 0;">After-Discharge (ECoG)</div>
<svg style="left:2501px;top:589px" width="14" height="9" viewBox="0 0 14 9"><path d="M1.6 1.6L7 6.9L12.4 1.6" fill="none" stroke="#fff" stroke-width="2"/></svg>
<div class="r" style="left:2206px;top:630px;width:314px;height:50px;background:linear-gradient(135deg,#e040fb,#9c27b0);border:1px solid #00ff00;"></div>
<svg style="left:2287px;top:648px" width="11" height="17" viewBox="0 0 11 17"><path d="M7.2 0.8 L0.9 9 L4.9 9 L4.1 16 L10.3 7.6 L6.3 7.6 Z" fill="#f5832a"/></svg>
<div class="t" style="left:2310.50px;top:647.61px;font-size:17px;color:#fff;font-weight:700;font-family:'Liberation Sans', sans-serif;transform:scaleX(0.9698);transform-origin:0 0;">TRIGGER EVENT</div>
<div class="r" style="left:2206px;top:692px;width:314px;height:45px;background:#333;border:1px solid #00ff00;"></div>
<svg style="left:2297px;top:708px" width="14" height="14" viewBox="0 0 14 14"><rect x="0.3" y="0.4" width="13.6" height="13.3" rx="2" fill="#00d26a"/><path d="M2.6 6.9L5.4 9.3L11.1 3.8" fill="none" stroke="#fff" stroke-width="1.4"/></svg>
<div class="t" style="left:2316.75px;top:707.92px;font-size:14.5px;color:#00ff00;font-weight:400;font-family:'Liberation Sans', sans-serif;transform:scaleX(0.9487);transform-origin:0 0;">RESOLVE EVENT</div>
<div class="t" style="left:2205.17px;top:765.10px;font-size:15px;color:#64b5f6;font-weight:400;font-family:'Liberation Sans', sans-serif;transform:scaleX(0.8308);transform-origin:0 0;">FILTRELER</div>
<div class="t" style="left:2205.10px;top:794.62px;font-size:12.5px;color:#00ff00;font-weight:400;font-family:'Liberation Sans', sans-serif;transform:scaleX(0.9041);transform-origin:0 0;">LFF (HZ)</div>
<div class="r" style="left:2206px;top:835px;width:313px;height:10px;background:#efefef;border-radius:5px;"></div>
<div class="r" style="left:2206.2px;top:830.3px;width:19.4px;height:19.4px;background:#0075ff;border-radius:50%;"></div>
<div class="t" style="left:2348.02px;top:866.42px;font-size:14.5px;color:#00ff00;font-weight:400;font-family:'Liberation Sans', sans-serif;transform:scaleX(0.9828);transform-origin:0 0;">1 Hz</div>
<div class="t" style="left:2205.07px;top:885.82px;font-size:12.5px;color:#00ff00;font-weight:400;font-family:'Liberation Sans', sans-serif;transform:scaleX(0.9275);transform-origin:0 0;">HFF (HZ)</div>
<div class="r" style="left:2206px;top:926px;width:313px;height:10px;background:#efefef;border-radius:5px;"></div>
<div class="r" style="left:2206.2px;top:921.3px;width:19.4px;height:19.4px;background:#0075ff;border-radius:50%;"></div>
<div class="t" style="left:2345.00px;top:957.62px;font-size:14.5px;color:#00ff00;font-weight:400;font-family:'Liberation Sans', sans-serif;transform:scaleX(0.9605);transform-origin:0 0;">70 Hz</div>
<div class="t" style="left:2206.00px;top:995.30px;font-size:15px;color:#e040fb;font-weight:400;font-family:'Liberation Sans', sans-serif;transform:scaleX(0.9009);transform-origin:0 0;">CORTICAL INFO</div>
<div class="t" style="left:2214.93px;top:1037.49px;font-size:12.8px;color:#e040fb;font-weight:400;font-family:'Liberation Mono', monospace;transform:scaleX(1.0741);transform-origin:0 0;">ECoG (Electrocorticography)</div>
<div class="t" style="left:2216.00px;top:1059.29px;font-size:12.8px;color:#c8c8c8;font-weight:400;font-family:'Liberation Mono', monospace;transform:scaleX(1.0744);transform-origin:0 0;">Continuous cortical activity</div>
<div class="r" style="left:2215.5px;top:1081px;width:9px;height:9px;background:#22c55e;"></div>
<div class="t" style="left:2231.22px;top:1081.19px;font-size:12.8px;color:#22c55e;font-weight:400;font-family:'Liberation Mono', monospace;transform:scaleX(1.0795);transform-origin:0 0;">Normal (&lt;200μV)</div>
<div class="r" style="left:2216px;top:1103px;width:9px;height:9px;background:#eab308;"></div>
<div class="t" style="left:2231.73px;top:1103.39px;font-size:12.8px;color:#eab308;font-weight:400;font-family:'Liberation Mono', monospace;transform:scaleX(1.0742);transform-origin:0 0;">Elevated (200-400μV)</div>
<div class="r" style="left:2216px;top:1125px;width:9px;height:9px;background:#ef4444;"></div>
<div class="t" style="left:2232.80px;top:1125.59px;font-size:12.8px;color:#ef4444;font-weight:400;font-family:'Liberation Mono', monospace;transform:scaleX(1.0683);transform-origin:0 0;">After-discharge (&gt;400μV)</div>
<svg style="left:2204px;top:1176px" width="26" height="24" viewBox="0 0 26 24"><g transform="translate(12 11.6) rotate(-43)"><rect x="-10.3" y="-4.6" width="20.6" height="9.2" rx="4.6" fill="#fcd53f"/><path d="M0.3 -4.6 H5.7 A4.6 4.6 0 0 1 5.7 4.6 H0.3 Z" fill="#f92f2f"/><circle cx="6.6" cy="-1.2" r="1.1" fill="#fff" opacity="0.9"/></g></svg>
<div class="t" style="left:2231.30px;top:1179.78px;font-size:15.5px;color:#ff9800;font-weight:700;font-family:'Liberation Sans', sans-serif;transform:scaleX(0.8980);transform-origin:0 0;">ANESTHESIA</div>
<div class="r" style="left:2212px;top:1214px;width:15px;height:15px;background:#0075ff;border-radius:50%;box-shadow:inset 0 0 0 1.5px #0075ff, inset 0 0 0 3.1px #fff;"></div>
<div class="t" style="left:2232.20px;top:1218.05px;font-size:14px;color:#4caf50;font-weight:400;font-family:'Liberation Sans', sans-serif;transform:scaleX(0.9167);transform-origin:0 0;">TIVA</div>
<div class="r" style="left:2367px;top:1214.5px;width:14.5px;height:14.5px;background:#fff;border:1px solid #767676;border-radius:50%;"></div>
<div class="t" style="left:2387.00px;top:1218.05px;font-size:14px;color:#ff9800;font-weight:400;font-family:'Liberation Sans', sans-serif;transform:scaleX(0.9956);transform-origin:0 0;">Volatile</div>
<div class="t" style="left:2211.15px;top:1241.69px;font-size:11px;color:#a8a8a8;font-weight:400;font-family:'Liberation Sans', sans-serif;transform:scaleX(0.9519);transform-origin:0 0;">MEP: 100% | SSEP: 100% | D-Wave: 100%</div>
<div class="t" style="left:2205.80px;top:1288.58px;font-size:15.5px;color:#00ff00;font-weight:700;font-family:'Liberation Sans', sans-serif;transform:scaleX(0.8921);transform-origin:0 0;">SYSTEM</div>
<div class="r" style="left:2206px;top:1316px;width:314px;height:50px;background:#0a0a0a;border:1px solid #00ff00;"></div>
<svg style="left:2296px;top:1328px" width="26" height="26" viewBox="0 0 26 26"><path d="M4.9 10.7 L10.6 6 L10.6 9 L21 9 L21 12.8 L10.6 12.8 L10.6 15.6 Z" fill="#7d5fd0"/><text x="5" y="22" font-family="Liberation Sans" font-weight="700" font-size="6.6" fill="#7d5fd0" textLength="16" lengthAdjust="spacingAndGlyphs">BACK</text></svg>
<div class="t" style="left:2324.85px;top:1334.38px;font-size:17.5px;color:#00ff00;font-weight:400;font-family:'Liberation Sans', sans-serif;transform:scaleX(0.9491);transform-origin:0 0;">Back to Setup</div>
<div class="r" style="left:2539px;top:40px;width:20px;height:1340px;background:#f0f0f0;border-left:1.5px solid #fff;border-top:1px solid #fff;"></div>
<div class="r" style="left:2541px;top:61px;width:17px;height:1264px;background:#c1c1c1;"></div>
<svg style="left:2544px;top:47px" width="11" height="7" viewBox="0 0 11 7"><path d="M0.5 6.5L5.5 1L10.5 6.5Z" fill="#a3a3a3"/></svg>
<svg style="left:2544px;top:1365px" width="11" height="7" viewBox="0 0 11 7"><path d="M0.5 0.5L5.5 6L10.5 0.5Z" fill="#505050"/></svg>
<div class="r" style="left:0px;top:1380px;width:2559px;height:1px;background:#404040;"></div>
<div class="r" style="left:0px;top:1381px;width:2559px;height:1px;background:#202124;"></div>
</body></html>
